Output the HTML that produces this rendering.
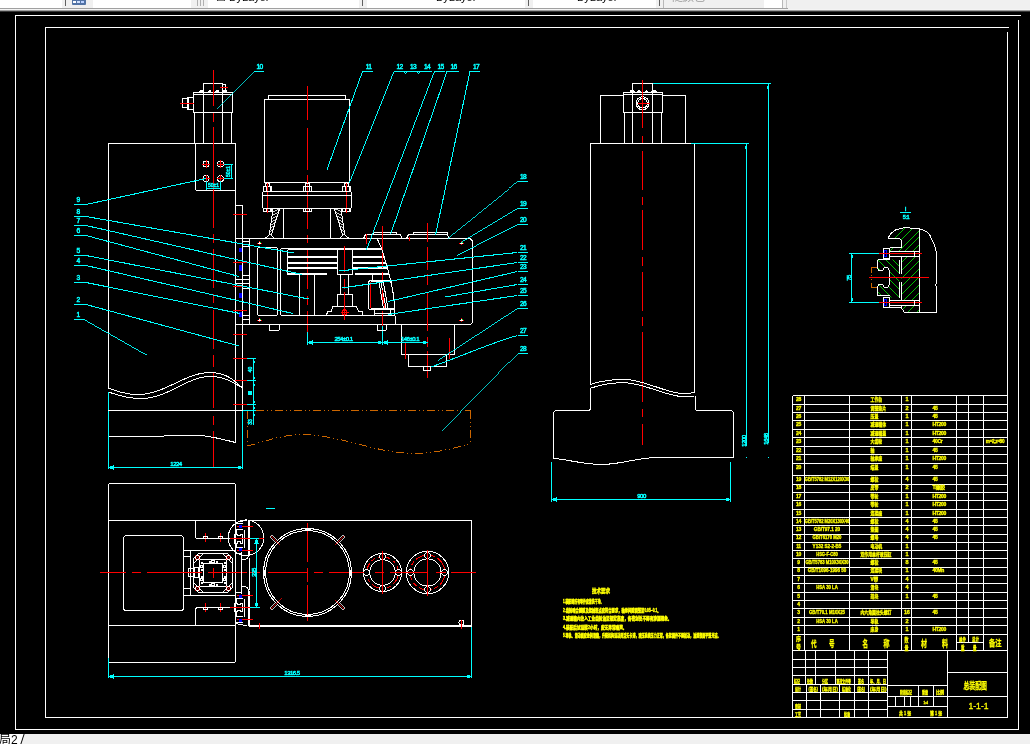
<!DOCTYPE html>
<html lang="zh">
<head>
<meta charset="utf-8">
<title>总装配图 1-1-1</title>
<style>
html,body{margin:0;padding:0;background:#000;overflow:hidden}
body{width:1030px;height:744px;position:relative;font-family:"Liberation Sans","Noto Sans CJK SC",sans-serif}
#tb{position:absolute;left:0;top:0;width:1030px;height:12px;background:#f0f0f0;overflow:hidden}
#tb .w{position:absolute;top:0;height:8px;background:#fff}
#tb .vl{position:absolute;top:0;width:1px;height:6px;background:#606060}
#tb .sep{position:absolute;top:0;height:8px;width:2px;background:#a0a0a0}
#tb .txt{position:absolute;will-change:transform;top:-9px;font-size:11px;line-height:12px;color:#000;white-space:nowrap}
#tb .g{color:#999}
#tb .b1{position:absolute;left:0;top:8px;width:788px;height:1px;background:#a0a0a0}
#tb .b2{position:absolute;left:0;top:9px;width:1030px;height:1px;background:#f4f4f4}
#tb .b3{position:absolute;left:0;top:10px;width:1030px;height:1px;background:#a0a0a0}
#tb .b4{position:absolute;left:0;top:11px;width:1030px;height:1px;background:#383838}
#sb{position:absolute;left:0;top:734px;width:1030px;height:10px;background:#f0f0f0;overflow:hidden}
#sb .tab{position:absolute;left:-8px;top:0;width:30px;height:10px;background:#fff;transform:skewX(-18deg);border-right:1px solid #000}
#sb .lbl{position:absolute;left:-1px;top:0px;will-change:transform;font-size:12px;line-height:13px;color:#000;white-space:nowrap}
svg{position:absolute;left:0;top:0}
svg text{font-family:"Liberation Sans","Noto Sans CJK SC",sans-serif}
</style>
</head>
<body>
<div id="tb">
<div class="w" style="left:0;width:62px"></div>
<div class="vl" style="left:65px"></div>
<div style="position:absolute;left:72px;top:0;width:14px;height:5px;background:#5273a5;border-radius:0 0 1px 1px"></div>
<div style="position:absolute;left:73px;top:1px;width:3px;height:2px;background:#fff"></div>
<div style="position:absolute;left:77px;top:1px;width:3px;height:2px;background:#cfe0ff"></div>
<div style="position:absolute;left:81px;top:1px;width:3px;height:2px;background:#b9d0ff"></div>
<div class="w" style="left:93px;width:98px"></div>
<div class="vl" style="left:197px;background:#b0b0b0"></div><div class="vl" style="left:200px;background:#b0b0b0"></div><div class="vl" style="left:203px;background:#b0b0b0"></div>
<div class="w" style="left:208px;width:151px"></div><div class="vl" style="left:362px"></div>
<div class="w" style="left:367px;width:158px"></div><div class="vl" style="left:528px"></div>
<div class="w" style="left:533px;width:123px"></div><div class="vl" style="left:659px"></div>
<div class="vl" style="left:663px;height:8px;background:#b8b8b8"></div><div class="w" style="left:764px;width:18px"></div><div class="vl" style="left:782px;height:8px;background:#b8b8b8"></div><div class="vl" style="left:786px;height:8px;background:#c8c8c8"></div>
<span class="txt" style="left:216px">☐ ByLayer</span>
<span class="txt" style="left:436px">ByLayer</span>
<span class="txt" style="left:577px">ByLayer</span>
<span class="txt g" style="left:672px;top:-9px">随颜色</span>
<div class="b1"></div><div class="b2"></div><div class="b3"></div><div class="b4"></div>
</div>
<svg width="1030" height="744" viewBox="0 0 1030 744" fill="none" stroke-width="1" shape-rendering="crispEdges">
<line x1="15" y1="15.5" x2="1021" y2="15.5" stroke="#fff"/>
<line x1="15.5" y1="15" x2="15.5" y2="730" stroke="#fff"/>
<line x1="15" y1="729.5" x2="1019" y2="729.5" stroke="#fff"/>
<line x1="1018.5" y1="20" x2="1018.5" y2="730" stroke="#fff"/>
<line x1="45" y1="27.5" x2="1009" y2="27.5" stroke="#fff"/>
<line x1="45.5" y1="27" x2="45.5" y2="718" stroke="#fff"/>
<line x1="45" y1="717.5" x2="1008" y2="717.5" stroke="#fff"/>
<line x1="1007.5" y1="32" x2="1007.5" y2="718" stroke="#fff"/>
<line x1="108.5" y1="143.5" x2="108.5" y2="388.5" stroke="#fff"/>
<line x1="108" y1="143.5" x2="196" y2="143.5" stroke="#fff"/>
<path d="M195.5,143.5 V188.5 Q195.5,190.5 197.5,190.5 H235.5" stroke="#fff" fill="none"/>
<line x1="235.5" y1="143.5" x2="235.5" y2="443" stroke="#fff"/>
<line x1="195.5" y1="143.5" x2="236" y2="143.5" stroke="#fff"/>
<line x1="235.5" y1="205.5" x2="243" y2="205.5" stroke="#fff"/>
<line x1="242.5" y1="205.5" x2="242.5" y2="410.5" stroke="#fff"/>
<path d="M203.5,92.5 V83.5 H222.5 V92.5" stroke="#fff" fill="none"/>
<rect x="222.5" y="84.5" width="3" height="6" stroke="#fff" fill="none"/>
<rect x="193.5" y="92.5" width="39" height="20" stroke="#fff" fill="none"/>
<line x1="193.5" y1="94.5" x2="232.5" y2="94.5" stroke="#fff"/>
<line x1="203.5" y1="92.5" x2="203.5" y2="143.5" stroke="#fff"/>
<line x1="222.5" y1="92.5" x2="222.5" y2="143.5" stroke="#fff"/>
<line x1="194.5" y1="112.5" x2="194.5" y2="143.5" stroke="#fff"/>
<line x1="231.5" y1="112.5" x2="231.5" y2="143.5" stroke="#fff"/>
<rect x="199" y="91" width="4.5" height="1" fill="#fff" stroke="none"/>
<rect x="200" y="90" width="3" height="1" fill="#fff" stroke="none"/>
<rect x="208" y="91" width="3" height="1" fill="#fff" stroke="none"/>
<rect x="209" y="90" width="1.5" height="1" fill="#fff" stroke="none"/>
<rect x="215" y="91" width="4" height="1" fill="#fff" stroke="none"/>
<rect x="216" y="90" width="2.5" height="1" fill="#fff" stroke="none"/>
<rect x="223" y="91" width="4" height="1" fill="#fff" stroke="none"/>
<rect x="224" y="90" width="2.5" height="1" fill="#fff" stroke="none"/>
<rect x="182.5" y="98.5" width="5" height="9" stroke="#fff" fill="none"/>
<rect x="187.5" y="97.5" width="6" height="12" stroke="#fff" fill="none"/>
<line x1="188.5" y1="97.5" x2="188.5" y2="109.5" stroke="#fff"/>
<line x1="180" y1="103.5" x2="194" y2="103.5" stroke="#f00"/>
<line x1="220" y1="87.5" x2="228" y2="87.5" stroke="#f00"/>
<line x1="213.5" y1="70" x2="213.5" y2="106" stroke="#f00"/>
<line x1="213.5" y1="113" x2="213.5" y2="122" stroke="#f00"/>
<line x1="213.5" y1="127" x2="213.5" y2="227.5" stroke="#f00"/>
<line x1="213.5" y1="234" x2="213.5" y2="242.5" stroke="#f00"/>
<line x1="213.5" y1="249" x2="213.5" y2="287.5" stroke="#f00"/>
<line x1="213.5" y1="294" x2="213.5" y2="302.5" stroke="#f00"/>
<line x1="213.5" y1="310" x2="213.5" y2="349" stroke="#f00"/>
<line x1="213.5" y1="355" x2="213.5" y2="367" stroke="#f00"/>
<line x1="213.5" y1="372" x2="213.5" y2="408" stroke="#f00"/>
<line x1="213.5" y1="416" x2="213.5" y2="425" stroke="#f00"/>
<line x1="213.5" y1="431" x2="213.5" y2="467" stroke="#f00"/>
<circle cx="206" cy="164" r="3" stroke="#fff" fill="none"/>
<line x1="202" y1="164" x2="210" y2="164" stroke="#f00"/>
<line x1="206" y1="160" x2="206" y2="168" stroke="#f00"/>
<circle cx="206" cy="178.5" r="3" stroke="#fff" fill="none"/>
<line x1="202" y1="178.5" x2="210" y2="178.5" stroke="#f00"/>
<line x1="206" y1="174.5" x2="206" y2="182.5" stroke="#f00"/>
<circle cx="220.5" cy="164" r="3" stroke="#fff" fill="none"/>
<line x1="216.5" y1="164" x2="224.5" y2="164" stroke="#f00"/>
<line x1="220.5" y1="160" x2="220.5" y2="168" stroke="#f00"/>
<circle cx="220.5" cy="178.5" r="3" stroke="#fff" fill="none"/>
<line x1="216.5" y1="178.5" x2="224.5" y2="178.5" stroke="#f00"/>
<line x1="220.5" y1="174.5" x2="220.5" y2="182.5" stroke="#f00"/>
<line x1="224" y1="164.5" x2="233" y2="164.5" stroke="#0ff"/>
<line x1="224" y1="178.5" x2="233" y2="178.5" stroke="#0ff"/>
<line x1="231.5" y1="164" x2="231.5" y2="179" stroke="#0ff"/>
<text x="230" y="171.5" fill="#0ff" stroke="#0ff" stroke-width="0.5" font-size="5" text-anchor="middle" transform="rotate(-90 230 171.5)">50±1</text>
<line x1="206.5" y1="181" x2="206.5" y2="190" stroke="#0ff"/>
<line x1="220.5" y1="181" x2="220.5" y2="190" stroke="#0ff"/>
<line x1="206" y1="188.5" x2="221" y2="188.5" stroke="#0ff"/>
<text x="213.5" y="187" fill="#0ff" stroke="#0ff" stroke-width="0.5" font-size="5" text-anchor="middle">50±1</text>
<rect x="264.5" y="99.5" width="85" height="83" stroke="#fff" fill="none"/>
<path d="M268.5,99.5 V95.5 H345.5 V99.5" stroke="#fff" fill="none"/>
<line x1="307.5" y1="86" x2="307.5" y2="120" stroke="#f00"/>
<line x1="307.5" y1="128" x2="307.5" y2="170" stroke="#f00"/>
<line x1="307.5" y1="175" x2="307.5" y2="229" stroke="#f00"/>
<line x1="307.5" y1="234.5" x2="307.5" y2="243" stroke="#f00"/>
<line x1="307.5" y1="247.5" x2="307.5" y2="288.5" stroke="#f00"/>
<line x1="307.5" y1="296" x2="307.5" y2="305" stroke="#f00"/>
<line x1="307.5" y1="310.5" x2="307.5" y2="332" stroke="#f00"/>
<rect x="263.5" y="186.5" width="8" height="5" stroke="#fff" fill="none"/>
<rect x="265.5" y="183.5" width="4" height="3" stroke="#fff" fill="none"/>
<rect x="263.5" y="208.5" width="8" height="3" stroke="#fff" fill="none"/>
<line x1="266.5" y1="186.5" x2="266.5" y2="191.5" stroke="#fff"/>
<line x1="270.5" y1="186.5" x2="270.5" y2="191.5" stroke="#fff"/>
<line x1="266.5" y1="208.5" x2="266.5" y2="211.5" stroke="#fff"/>
<line x1="270.5" y1="208.5" x2="270.5" y2="211.5" stroke="#fff"/>
<line x1="267.5" y1="183" x2="267.5" y2="213" stroke="#f00"/>
<rect x="303.5" y="186.5" width="8" height="5" stroke="#fff" fill="none"/>
<rect x="305.5" y="183.5" width="4" height="3" stroke="#fff" fill="none"/>
<rect x="303.5" y="208.5" width="8" height="3" stroke="#fff" fill="none"/>
<line x1="305.5" y1="186.5" x2="305.5" y2="191.5" stroke="#fff"/>
<line x1="309.5" y1="186.5" x2="309.5" y2="191.5" stroke="#fff"/>
<line x1="305.5" y1="208.5" x2="305.5" y2="211.5" stroke="#fff"/>
<line x1="309.5" y1="208.5" x2="309.5" y2="211.5" stroke="#fff"/>
<rect x="342.5" y="186.5" width="8" height="5" stroke="#fff" fill="none"/>
<rect x="344.5" y="183.5" width="4" height="3" stroke="#fff" fill="none"/>
<rect x="342.5" y="208.5" width="8" height="3" stroke="#fff" fill="none"/>
<line x1="345.5" y1="186.5" x2="345.5" y2="191.5" stroke="#fff"/>
<line x1="349.5" y1="186.5" x2="349.5" y2="191.5" stroke="#fff"/>
<line x1="345.5" y1="208.5" x2="345.5" y2="211.5" stroke="#fff"/>
<line x1="349.5" y1="208.5" x2="349.5" y2="211.5" stroke="#fff"/>
<line x1="346.5" y1="183" x2="346.5" y2="213" stroke="#f00"/>
<rect x="262.5" y="191.5" width="89" height="17" rx="2" stroke="#fff" fill="none"/>
<line x1="262.5" y1="195.5" x2="351.5" y2="195.5" stroke="#fff"/>
<line x1="283.5" y1="208.5" x2="283.5" y2="238.5" stroke="#fff"/>
<line x1="330.5" y1="208.5" x2="330.5" y2="238.5" stroke="#fff"/>
<path d="M273,209 L269.3,235 L265.5,238 M279.5,209 L272.3,232 L271.5,235 L273.5,238" stroke="#fff" fill="none"/>
<path d="M273,212 L279.5,209" stroke="#fff" fill="none" stroke-width="0.8"/>
<path d="M272.54,215.25 L278.56,212.25" stroke="#fff" fill="none" stroke-width="0.8"/>
<path d="M272.07,218.5 L277.62,215.5" stroke="#fff" fill="none" stroke-width="0.8"/>
<path d="M271.61,221.75 L276.69,218.75" stroke="#fff" fill="none" stroke-width="0.8"/>
<path d="M271.15,225 L275.75,222" stroke="#fff" fill="none" stroke-width="0.8"/>
<path d="M270.69,228.25 L274.81,225.25" stroke="#fff" fill="none" stroke-width="0.8"/>
<path d="M270.23,231.5 L273.88,228.5" stroke="#fff" fill="none" stroke-width="0.8"/>
<path d="M269.76,234.75 L272.94,231.75" stroke="#fff" fill="none" stroke-width="0.8"/>
<path d="M341,209 L344.7,235 L348.5,238 M334.5,209 L341.7,232 L342.5,235 L340.5,238" stroke="#fff" fill="none"/>
<path d="M341,212 L334.5,209" stroke="#fff" fill="none" stroke-width="0.8"/>
<path d="M341.46,215.25 L335.44,212.25" stroke="#fff" fill="none" stroke-width="0.8"/>
<path d="M341.93,218.5 L336.38,215.5" stroke="#fff" fill="none" stroke-width="0.8"/>
<path d="M342.39,221.75 L337.31,218.75" stroke="#fff" fill="none" stroke-width="0.8"/>
<path d="M342.85,225 L338.25,222" stroke="#fff" fill="none" stroke-width="0.8"/>
<path d="M343.31,228.25 L339.19,225.25" stroke="#fff" fill="none" stroke-width="0.8"/>
<path d="M343.77,231.5 L340.12,228.5" stroke="#fff" fill="none" stroke-width="0.8"/>
<path d="M344.24,234.75 L341.06,231.75" stroke="#fff" fill="none" stroke-width="0.8"/>
<path d="M235.5,238.5 H468.5 Q472.5,238.5 472.5,242.5 V320.5 Q472.5,324.5 468.5,324.5 H235.5" stroke="#fff" fill="none"/>
<line x1="249.5" y1="238.5" x2="249.5" y2="324.5" stroke="#fff"/>
<line x1="242.5" y1="241.5" x2="249.5" y2="241.5" stroke="#fff"/>
<line x1="242.5" y1="246.5" x2="249.5" y2="246.5" stroke="#fff"/>
<line x1="242.5" y1="275.5" x2="249.5" y2="275.5" stroke="#fff"/>
<line x1="235.5" y1="279.5" x2="249.5" y2="279.5" stroke="#fff"/>
<line x1="235.5" y1="283.5" x2="249.5" y2="283.5" stroke="#fff"/>
<line x1="242.5" y1="288.5" x2="249.5" y2="288.5" stroke="#fff"/>
<line x1="242.5" y1="315.5" x2="249.5" y2="315.5" stroke="#fff"/>
<line x1="242.5" y1="319.5" x2="249.5" y2="319.5" stroke="#fff"/>
<rect x="239" y="248" width="3" height="4" fill="#00f" stroke="none"/>
<rect x="239" y="265" width="3" height="5.5" fill="#00f" stroke="none"/>
<rect x="239" y="292.5" width="3" height="5" fill="#00f" stroke="none"/>
<rect x="239" y="312" width="3" height="4.5" fill="#00f" stroke="none"/>
<line x1="233" y1="214.5" x2="246.5" y2="214.5" stroke="#f00"/>
<line x1="233" y1="262.5" x2="246.5" y2="262.5" stroke="#f00"/>
<line x1="233" y1="286.5" x2="246.5" y2="286.5" stroke="#f00"/>
<line x1="233" y1="310.5" x2="246.5" y2="310.5" stroke="#f00"/>
<line x1="233" y1="334.5" x2="246.5" y2="334.5" stroke="#f00"/>
<line x1="233" y1="358.5" x2="246.5" y2="358.5" stroke="#f00"/>
<line x1="233" y1="380.5" x2="246.5" y2="380.5" stroke="#f00"/>
<line x1="233" y1="404.5" x2="246.5" y2="404.5" stroke="#f00"/>
<rect x="257.5" y="247.5" width="20" height="68" rx="2" stroke="#fff" fill="none"/>
<path d="M394.5,315.5 H283 Q280.5,315.5 280.5,313 V250.5 Q280.5,248 283,248 H380.5" stroke="#fff" fill="none"/>
<line x1="287.5" y1="249.5" x2="287.5" y2="274.5" stroke="#fff"/>
<line x1="287.5" y1="249.5" x2="337.5" y2="249.5" stroke="#fff"/>
<rect x="287" y="255.5" width="51" height="2" fill="#fff" stroke="none"/>
<rect x="287" y="261.5" width="51" height="2" fill="#fff" stroke="none"/>
<rect x="287" y="266.5" width="51" height="2" fill="#fff" stroke="none"/>
<rect x="287" y="273" width="40" height="2" fill="#fff" stroke="none"/>
<rect x="337.5" y="249.5" width="15" height="25" stroke="#fff" fill="none"/>
<line x1="352.5" y1="249.5" x2="381" y2="249.5" stroke="#fff"/>
<rect x="352" y="255.5" width="32.5" height="2" fill="#fff" stroke="none"/>
<rect x="352" y="261.5" width="34" height="2" fill="#fff" stroke="none"/>
<rect x="352" y="266.5" width="35.5" height="2" fill="#fff" stroke="none"/>
<rect x="355" y="272.5" width="34" height="2" fill="#fff" stroke="none"/>
<line x1="299.5" y1="274.5" x2="299.5" y2="315.5" stroke="#fff"/>
<line x1="314.5" y1="274.5" x2="314.5" y2="315.5" stroke="#fff"/>
<line x1="340.5" y1="274.5" x2="340.5" y2="294.5" stroke="#fff"/>
<line x1="348.5" y1="274.5" x2="348.5" y2="294.5" stroke="#fff"/>
<rect x="337.5" y="294.5" width="15" height="12" stroke="#fff" fill="none"/>
<path d="M326.5,315.5 L327.5,311.5 H331 L333,306.5 H356.5 L358.5,311.5 H362 L363,315.5" stroke="#fff" fill="none"/>
<circle cx="344.5" cy="312.2" r="2.5" stroke="#f00" fill="none"/>
<line x1="341" y1="312.5" x2="348.5" y2="312.5" stroke="#f00"/>
<line x1="344.5" y1="246" x2="344.5" y2="272" stroke="#f00"/>
<line x1="344.5" y1="278.5" x2="344.5" y2="289" stroke="#f00"/>
<line x1="344.5" y1="292" x2="344.5" y2="320" stroke="#f00"/>
<path d="M363.5,238.5 L365.5,234.5 H400 L402.5,238.5 M373.5,234.5 V232.5 H396 V234.5" stroke="#fff" fill="none"/>
<path d="M406.5,238.5 L408.5,234.5 H447 L449.5,238.5 M413.5,234.5 V232.5 H447 V234.5" stroke="#fff" fill="none"/>
<line x1="366.5" y1="234" x2="366.5" y2="244" stroke="#f00"/>
<line x1="409.5" y1="237" x2="409.5" y2="240.5" stroke="#f00"/>
<line x1="382.5" y1="226" x2="382.5" y2="267.5" stroke="#f00"/>
<line x1="382.5" y1="271.5" x2="382.5" y2="282.5" stroke="#f00"/>
<line x1="382.5" y1="288" x2="382.5" y2="305" stroke="#f00"/>
<line x1="382.5" y1="310.5" x2="382.5" y2="326" stroke="#f00"/>
<line x1="382.5" y1="326" x2="382.5" y2="344.5" stroke="#0ff"/>
<line x1="427.5" y1="223" x2="427.5" y2="242" stroke="#f00"/>
<line x1="427.5" y1="247" x2="427.5" y2="270" stroke="#f00"/>
<line x1="427.5" y1="274" x2="427.5" y2="285" stroke="#f00"/>
<line x1="427.5" y1="292" x2="427.5" y2="331" stroke="#f00"/>
<line x1="427.5" y1="337" x2="427.5" y2="346.5" stroke="#f00"/>
<line x1="427.5" y1="351" x2="427.5" y2="377.5" stroke="#f00"/>
<path d="M377,238.5 L381,246.7 L383.4,253.7 L386,263.2 L387.8,268.8 L390.3,279 L392.9,291.6 L394.1,301.7 L394.8,314.3 L396,324.5" stroke="#fff" fill="none"/>
<path d="M394,280.5 H371 Q368.5,280.5 368.5,283 V307 Q368.5,309.5 371,309.5 H394.5" stroke="#fff" fill="none"/>
<path d="M392,281.5 H371 M371,308.5 H394.5" stroke="#fff" fill="none"/>
<line x1="370.5" y1="282" x2="370.5" y2="307.5" stroke="#f00"/>
<line x1="372.5" y1="274.5" x2="372.5" y2="280.5" stroke="#fff"/>
<path d="M379,282 L383.4,308 M380.9,282 L386,308 M383.4,282 L387.8,308" stroke="#fff" fill="none"/>
<line x1="382" y1="290" x2="384.6" y2="308" stroke="#f00" stroke-width="1.05"/>
<path d="M374.5,309.5 V314.5 M390.5,309.5 V314.5 M373.5,313.5 H394.5" stroke="#fff" fill="none"/>
<rect x="258" y="243" width="3" height="1" fill="#fff" stroke="none"/>
<rect x="259" y="242" width="1" height="1" fill="#fff" stroke="none"/>
<rect x="257" y="243" width="1" height="1" fill="#f00" stroke="none"/>
<rect x="261" y="243" width="1" height="1" fill="#f00" stroke="none"/>
<rect x="259" y="241" width="1" height="1" fill="#f00" stroke="none"/>
<rect x="259" y="244" width="1" height="1" fill="#f00" stroke="none"/>
<rect x="260" y="242" width="1" height="1" fill="#0c0" stroke="none"/>
<rect x="258" y="320" width="3" height="1" fill="#fff" stroke="none"/>
<rect x="259" y="319" width="1" height="1" fill="#fff" stroke="none"/>
<rect x="257" y="320" width="1" height="1" fill="#f00" stroke="none"/>
<rect x="261" y="320" width="1" height="1" fill="#f00" stroke="none"/>
<rect x="259" y="318" width="1" height="1" fill="#f00" stroke="none"/>
<rect x="259" y="321" width="1" height="1" fill="#f00" stroke="none"/>
<rect x="260" y="319" width="1" height="1" fill="#0c0" stroke="none"/>
<rect x="460" y="243" width="3" height="1" fill="#fff" stroke="none"/>
<rect x="461" y="242" width="1" height="1" fill="#fff" stroke="none"/>
<rect x="459" y="243" width="1" height="1" fill="#f00" stroke="none"/>
<rect x="463" y="243" width="1" height="1" fill="#f00" stroke="none"/>
<rect x="461" y="241" width="1" height="1" fill="#f00" stroke="none"/>
<rect x="461" y="244" width="1" height="1" fill="#f00" stroke="none"/>
<rect x="462" y="242" width="1" height="1" fill="#0c0" stroke="none"/>
<rect x="460" y="320" width="3" height="1" fill="#fff" stroke="none"/>
<rect x="461" y="319" width="1" height="1" fill="#fff" stroke="none"/>
<rect x="459" y="320" width="1" height="1" fill="#f00" stroke="none"/>
<rect x="463" y="320" width="1" height="1" fill="#f00" stroke="none"/>
<rect x="461" y="318" width="1" height="1" fill="#f00" stroke="none"/>
<rect x="461" y="321" width="1" height="1" fill="#f00" stroke="none"/>
<rect x="462" y="319" width="1" height="1" fill="#0c0" stroke="none"/>
<path d="M269.5,324.5 V329 Q269.5,330.5 271,330.5 H278 Q279.5,330.5 279.5,329 V324.5" stroke="#fff" fill="none"/>
<path d="M377.5,324.5 V329 Q377.5,330.5 379,330.5 H385 Q386.5,330.5 386.5,329 V324.5" stroke="#fff" fill="none"/>
<path d="M401.5,324.5 V354.5 H454.5 V324.5" stroke="#fff" fill="none"/>
<path d="M408.5,354.5 V366.5 H446.5 V354.5" stroke="#fff" fill="none"/>
<rect x="423.5" y="366.5" width="7" height="4" stroke="#fff" fill="none"/>
<line x1="405.5" y1="343" x2="405.5" y2="359" stroke="#f00"/>
<line x1="449.5" y1="338" x2="449.5" y2="358.5" stroke="#f00"/>
<line x1="307.5" y1="332" x2="307.5" y2="344.5" stroke="#0ff"/>
<line x1="307" y1="342.5" x2="428" y2="342.5" stroke="#0ff"/>
<path d="M308,342.5 l4,-1.5 v3 z" stroke="#0ff" fill="#0ff"/>
<path d="M382,342.5 l-4,-1.5 v3 z" stroke="#0ff" fill="#0ff"/>
<path d="M383,342.5 l4,-1.5 v3 z" stroke="#0ff" fill="#0ff"/>
<path d="M427,342.5 l-4,-1.5 v3 z" stroke="#0ff" fill="#0ff"/>
<text x="343.5" y="341" fill="#0ff" stroke="#0ff" stroke-width="0.5" font-size="6" text-anchor="middle" letter-spacing="-0.5">254±0.1</text>
<text x="410" y="341" fill="#0ff" stroke="#0ff" stroke-width="0.5" font-size="6" text-anchor="middle" letter-spacing="-0.5">146±0.1</text>
<line x1="253.5" y1="358.5" x2="253.5" y2="425" stroke="#0ff"/>
<line x1="246.5" y1="358.5" x2="256" y2="358.5" stroke="#0ff"/>
<line x1="246.5" y1="380.5" x2="256" y2="380.5" stroke="#0ff"/>
<line x1="246.5" y1="404.5" x2="256" y2="404.5" stroke="#0ff"/>
<line x1="242.5" y1="410.5" x2="256" y2="410.5" stroke="#0ff"/>
<text x="252" y="369.5" fill="#0ff" stroke="#0ff" stroke-width="0.5" font-size="5" text-anchor="middle" transform="rotate(-90 252 369.5)">40</text>
<rect x="248" y="391" width="3.5" height="3.5" fill="#0ff" stroke="none"/>
<text x="252" y="422" fill="#0ff" stroke="#0ff" stroke-width="0.5" font-size="5" text-anchor="middle" transform="rotate(-90 252 422)">33</text>
<rect x="253" y="361" width="2" height="2" fill="#0ff" stroke="none"/>
<rect x="253" y="377" width="2" height="2" fill="#0ff" stroke="none"/>
<rect x="253" y="384" width="2" height="2" fill="#0ff" stroke="none"/>
<rect x="253" y="401" width="2" height="2" fill="#0ff" stroke="none"/>
<rect x="253" y="407" width="2" height="2" fill="#0ff" stroke="none"/>
<rect x="253" y="414" width="2" height="2" fill="#0ff" stroke="none"/>
<line x1="242.5" y1="410.5" x2="242.5" y2="469" stroke="#0ff"/>
<path d="M108.5,388 C118,391.5 126,394.5 138,394.5 C165,394.5 185,372.5 210,372.5 C226,372.5 234,380 243,388.5" stroke="#fff" fill="none"/>
<path d="M108.5,392 C118,395.5 128,398.5 141,398.5 C168,398.5 187,376.5 210,376.5 C224,376.5 233,382 241.5,387.5" stroke="#fff" fill="none"/>
<line x1="108.5" y1="392" x2="108.5" y2="469" stroke="#0ff"/>
<line x1="108" y1="410.5" x2="242.5" y2="410.5" stroke="#fff"/>
<path d="M108.5,436.5 H163 L165,435.5 H200 C214,436.5 225,440 235.5,442.5" stroke="#fff" fill="none"/>
<line x1="108" y1="467.5" x2="243" y2="467.5" stroke="#0ff"/>
<path d="M109,467.5 l4,-1.5 v3 z M242,467.5 l-4,-1.5 v3 z" stroke="#0ff" fill="#0ff"/>
<text x="176" y="466" fill="#0ff" stroke="#0ff" stroke-width="0.5" font-size="6" text-anchor="middle" letter-spacing="-0.5">1224</text>
<path d="M256,410.5 H470.5" stroke="#c60" fill="none" stroke-dasharray="8 3 1 3 1 3"/>
<path d="M247.5,411 V446" stroke="#c60" fill="none" stroke-dasharray="8 3 1 3 1 3"/>
<path d="M470.5,411 V443.5" stroke="#c60" fill="none" stroke-dasharray="8 3 1 3 1 3"/>
<path d="M247.5,446 C266,441 284,434.5 301.5,434.5 C340,434.5 375,453.5 415.5,453.5 C435,453.5 455,448 470.5,443.5" stroke="#c60" fill="none" stroke-dasharray="8 3 1 3 1 3"/>
<line x1="74" y1="204.5" x2="86" y2="204.5" stroke="#0ff"/>
<line x1="86" y1="204.5" x2="206" y2="178.5" stroke="#0ff" stroke-width="1.04"/>
<text x="78" y="201.7" fill="#0ff" stroke="#0ff" stroke-width="0.5" font-size="6.6" text-anchor="middle" letter-spacing="-0.6">9</text>
<line x1="74" y1="216.5" x2="86" y2="216.5" stroke="#0ff"/>
<line x1="86" y1="216.5" x2="294" y2="253" stroke="#0ff" stroke-width="1.04"/>
<text x="78" y="213.7" fill="#0ff" stroke="#0ff" stroke-width="0.5" font-size="6.6" text-anchor="middle" letter-spacing="-0.6">8</text>
<line x1="74" y1="225.5" x2="86" y2="225.5" stroke="#0ff"/>
<line x1="86" y1="225.5" x2="302" y2="274.5" stroke="#0ff" stroke-width="1.03"/>
<text x="78" y="222.7" fill="#0ff" stroke="#0ff" stroke-width="0.5" font-size="6.6" text-anchor="middle" letter-spacing="-0.6">7</text>
<line x1="74" y1="235.5" x2="86" y2="235.5" stroke="#0ff"/>
<line x1="86" y1="235.5" x2="239" y2="276.5" stroke="#0ff" stroke-width="1.02"/>
<text x="78" y="232.7" fill="#0ff" stroke="#0ff" stroke-width="0.5" font-size="6.6" text-anchor="middle" letter-spacing="-0.6">6</text>
<line x1="74" y1="255.5" x2="86" y2="255.5" stroke="#0ff"/>
<line x1="86" y1="255.5" x2="308.5" y2="299" stroke="#0ff" stroke-width="1.04"/>
<text x="78" y="252.7" fill="#0ff" stroke="#0ff" stroke-width="0.5" font-size="6.6" text-anchor="middle" letter-spacing="-0.6">5</text>
<line x1="74" y1="265.5" x2="86" y2="265.5" stroke="#0ff"/>
<line x1="86" y1="265.5" x2="293" y2="313.5" stroke="#0ff" stroke-width="1.03"/>
<text x="78" y="262.7" fill="#0ff" stroke="#0ff" stroke-width="0.5" font-size="6.6" text-anchor="middle" letter-spacing="-0.6">4</text>
<line x1="74" y1="282.5" x2="86" y2="282.5" stroke="#0ff"/>
<line x1="86" y1="282.5" x2="240" y2="313.5" stroke="#0ff" stroke-width="1.04"/>
<text x="78" y="279.7" fill="#0ff" stroke="#0ff" stroke-width="0.5" font-size="6.6" text-anchor="middle" letter-spacing="-0.6">3</text>
<line x1="74" y1="304.5" x2="86" y2="304.5" stroke="#0ff"/>
<line x1="86" y1="304.5" x2="239" y2="346" stroke="#0ff" stroke-width="1.02"/>
<text x="78" y="301.7" fill="#0ff" stroke="#0ff" stroke-width="0.5" font-size="6.6" text-anchor="middle" letter-spacing="-0.6">2</text>
<line x1="74" y1="319.5" x2="84" y2="319.5" stroke="#0ff"/>
<line x1="84" y1="319.5" x2="146.5" y2="355" stroke="#0ff" stroke-width="0.92"/>
<text x="78" y="316.7" fill="#0ff" stroke="#0ff" stroke-width="0.5" font-size="6.6" text-anchor="middle" letter-spacing="-0.6">1</text>
<line x1="253.5" y1="71.5" x2="264" y2="71.5" stroke="#0ff"/>
<line x1="253.5" y1="71.5" x2="217" y2="108.5" stroke="#0ff" stroke-width="0.75"/>
<text x="259.5" y="68.7" fill="#0ff" stroke="#0ff" stroke-width="0.5" font-size="6.6" text-anchor="middle" letter-spacing="-0.6">10</text>
<line x1="362.5" y1="71.5" x2="373" y2="71.5" stroke="#0ff"/>
<line x1="362.5" y1="71.5" x2="327" y2="169.5" stroke="#0ff" stroke-width="1"/>
<text x="368.5" y="68.7" fill="#0ff" stroke="#0ff" stroke-width="0.5" font-size="6.6" text-anchor="middle" letter-spacing="-0.6">11</text>
<line x1="393.5" y1="71.5" x2="431.5" y2="71.5" stroke="#0ff"/>
<line x1="393.5" y1="71.5" x2="349" y2="183" stroke="#0ff" stroke-width="0.98"/>
<text x="399.5" y="68.7" fill="#0ff" stroke="#0ff" stroke-width="0.5" font-size="6.6" text-anchor="middle" letter-spacing="-0.6">12</text>
<text x="413" y="68.7" fill="#0ff" stroke="#0ff" stroke-width="0.5" font-size="6.6" text-anchor="middle" letter-spacing="-0.6">13</text>
<text x="427" y="68.7" fill="#0ff" stroke="#0ff" stroke-width="0.5" font-size="6.6" text-anchor="middle" letter-spacing="-0.6">14</text>
<path d="M404,71.5 l1.5,2 l1.5,-2 M417,71.5 l1.5,2 l1.5,-2" stroke="#0ff" fill="none"/>
<line x1="434" y1="71.5" x2="445" y2="71.5" stroke="#0ff"/>
<line x1="434" y1="71.5" x2="366" y2="250" stroke="#0ff" stroke-width="0.99"/>
<text x="440.5" y="68.7" fill="#0ff" stroke="#0ff" stroke-width="0.5" font-size="6.6" text-anchor="middle" letter-spacing="-0.6">15</text>
<line x1="447" y1="71.5" x2="459" y2="71.5" stroke="#0ff"/>
<line x1="447" y1="71.5" x2="390.5" y2="234.5" stroke="#0ff" stroke-width="1"/>
<text x="453.5" y="68.7" fill="#0ff" stroke="#0ff" stroke-width="0.5" font-size="6.6" text-anchor="middle" letter-spacing="-0.6">16</text>
<line x1="470" y1="71.5" x2="480" y2="71.5" stroke="#0ff"/>
<line x1="470" y1="71.5" x2="435.5" y2="235" stroke="#0ff" stroke-width="1.04"/>
<text x="476" y="68.7" fill="#0ff" stroke="#0ff" stroke-width="0.5" font-size="6.6" text-anchor="middle" letter-spacing="-0.6">17</text>
<line x1="517.5" y1="181.5" x2="527.5" y2="181.5" stroke="#0ff"/>
<line x1="517.5" y1="181.5" x2="447.5" y2="238" stroke="#0ff" stroke-width="0.82"/>
<text x="523" y="178.7" fill="#0ff" stroke="#0ff" stroke-width="0.5" font-size="6.6" text-anchor="middle" letter-spacing="-0.6">18</text>
<line x1="517.5" y1="208.5" x2="527.5" y2="208.5" stroke="#0ff"/>
<line x1="517.5" y1="208.5" x2="461" y2="242.5" stroke="#0ff" stroke-width="0.91"/>
<text x="523" y="205.7" fill="#0ff" stroke="#0ff" stroke-width="0.5" font-size="6.6" text-anchor="middle" letter-spacing="-0.6">19</text>
<line x1="517.5" y1="224.5" x2="527.5" y2="224.5" stroke="#0ff"/>
<line x1="517.5" y1="224.5" x2="457" y2="255.5" stroke="#0ff" stroke-width="0.94"/>
<text x="523" y="221.7" fill="#0ff" stroke="#0ff" stroke-width="0.5" font-size="6.6" text-anchor="middle" letter-spacing="-0.6">20</text>
<line x1="517.5" y1="252.5" x2="527.5" y2="252.5" stroke="#0ff"/>
<line x1="517.5" y1="252.5" x2="339" y2="271" stroke="#0ff" stroke-width="1.05"/>
<text x="523" y="249.7" fill="#0ff" stroke="#0ff" stroke-width="0.5" font-size="6.6" text-anchor="middle" letter-spacing="-0.6">21</text>
<line x1="517.5" y1="262.5" x2="527.5" y2="262.5" stroke="#0ff"/>
<line x1="517.5" y1="262.5" x2="342" y2="288" stroke="#0ff" stroke-width="1.05"/>
<text x="523" y="259.7" fill="#0ff" stroke="#0ff" stroke-width="0.5" font-size="6.6" text-anchor="middle" letter-spacing="-0.6">22</text>
<line x1="517.5" y1="271.5" x2="527.5" y2="271.5" stroke="#0ff"/>
<line x1="517.5" y1="271.5" x2="388" y2="301.5" stroke="#0ff" stroke-width="1.03"/>
<text x="523" y="268.7" fill="#0ff" stroke="#0ff" stroke-width="0.5" font-size="6.6" text-anchor="middle" letter-spacing="-0.6">23</text>
<line x1="517.5" y1="284.5" x2="527.5" y2="284.5" stroke="#0ff"/>
<line x1="517.5" y1="284.5" x2="445" y2="297" stroke="#0ff" stroke-width="1.04"/>
<text x="523" y="281.7" fill="#0ff" stroke="#0ff" stroke-width="0.5" font-size="6.6" text-anchor="middle" letter-spacing="-0.6">24</text>
<line x1="517.5" y1="295.5" x2="527.5" y2="295.5" stroke="#0ff"/>
<line x1="517.5" y1="295.5" x2="388" y2="314.5" stroke="#0ff" stroke-width="1.05"/>
<text x="523" y="292.7" fill="#0ff" stroke="#0ff" stroke-width="0.5" font-size="6.6" text-anchor="middle" letter-spacing="-0.6">25</text>
<line x1="517.5" y1="308.5" x2="527.5" y2="308.5" stroke="#0ff"/>
<line x1="517.5" y1="308.5" x2="438" y2="360.5" stroke="#0ff" stroke-width="0.89"/>
<text x="523" y="305.7" fill="#0ff" stroke="#0ff" stroke-width="0.5" font-size="6.6" text-anchor="middle" letter-spacing="-0.6">26</text>
<line x1="517.5" y1="353.5" x2="527.5" y2="353.5" stroke="#0ff"/>
<line x1="517.5" y1="353.5" x2="442" y2="431" stroke="#0ff" stroke-width="0.76"/>
<text x="523" y="350.7" fill="#0ff" stroke="#0ff" stroke-width="0.5" font-size="6.6" text-anchor="middle" letter-spacing="-0.6">28</text>
<line x1="517.5" y1="335.5" x2="527.5" y2="335.5" stroke="#0ff"/>
<path d="M517.5,335.5 C490,343 460,357 431,367" stroke="#0ff" fill="none"/>
<text x="523" y="332.7" fill="#0ff" stroke="#0ff" stroke-width="0.5" font-size="6.6" text-anchor="middle" letter-spacing="-0.6">27</text>
<path d="M110.5,483.5 H233.5 Q235.5,483.5 235.5,485.5 V660.5 Q235.5,662.5 233.5,662.5 H110.5 Q108.5,662.5 108.5,660.5 V485.5 Q108.5,483.5 110.5,483.5 Z" stroke="#fff" fill="none"/>
<line x1="108.5" y1="520.5" x2="235.5" y2="520.5" stroke="#fff"/>
<line x1="108.5" y1="625.5" x2="235.5" y2="625.5" stroke="#fff"/>
<rect x="123.5" y="535.5" width="60" height="75" rx="3" stroke="#fff" fill="none"/>
<path d="M195.5,520.5 V536 Q195.5,538.5 198,538.5 H235.5" stroke="#fff" fill="none"/>
<path d="M195.5,625.5 V610 Q195.5,607.5 198,607.5 H235.5" stroke="#fff" fill="none"/>
<line x1="205.5" y1="533" x2="205.5" y2="542" stroke="#f00"/>
<rect x="203.5" y="536.5" width="4" height="2" stroke="#fff" fill="none"/>
<line x1="205.5" y1="603" x2="205.5" y2="612" stroke="#f00"/>
<rect x="203.5" y="607.5" width="4" height="2" stroke="#fff" fill="none"/>
<line x1="220.5" y1="533" x2="220.5" y2="542" stroke="#f00"/>
<rect x="218.5" y="536.5" width="4" height="2" stroke="#fff" fill="none"/>
<line x1="220.5" y1="603" x2="220.5" y2="612" stroke="#f00"/>
<rect x="218.5" y="607.5" width="4" height="2" stroke="#fff" fill="none"/>
<rect x="183.5" y="550.5" width="52" height="45" stroke="#fff" fill="none"/>
<line x1="190.5" y1="550.5" x2="190.5" y2="595.5" stroke="#fff"/>
<line x1="183.5" y1="556.5" x2="190.5" y2="556.5" stroke="#fff"/>
<line x1="183.5" y1="588.5" x2="190.5" y2="588.5" stroke="#fff"/>
<path d="M198.5,553.5 H227.5 L232.5,558.5 V587.5 L227.5,592.5 H198.5 L193.5,587.5 V558.5 Z" stroke="#fff" fill="none"/>
<path d="M193.5,563.5 L203.5,553.5 M222.5,553.5 L232.5,563.5 M193.5,582.5 L203.5,592.5 M222.5,592.5 L232.5,582.5" stroke="#fff" fill="none"/>
<rect x="199.5" y="559.5" width="27" height="27" stroke="#fff" fill="none"/>
<rect x="203.5" y="563.5" width="19" height="19" stroke="#fff" fill="none"/>
<rect x="188.5" y="568.5" width="5" height="8" stroke="#fff" fill="none"/>
<rect x="194.5" y="567.5" width="4" height="10" stroke="#fff" fill="none"/>
<rect x="208.5" y="560.5" width="2" height="2" fill="#fff" stroke="none"/>
<rect x="208.5" y="583.5" width="2" height="2" fill="#fff" stroke="none"/>
<rect x="215.5" y="560.5" width="2" height="2" fill="#fff" stroke="none"/>
<rect x="215.5" y="583.5" width="2" height="2" fill="#fff" stroke="none"/>
<rect x="211.5" y="560.5" width="3" height="2" stroke="#fff" fill="none"/>
<rect x="211.5" y="583.5" width="3" height="2" stroke="#fff" fill="none"/>
<rect x="200.5" y="562" width="2" height="2" fill="#fff" stroke="none"/>
<rect x="223.5" y="562" width="2" height="2" fill="#fff" stroke="none"/>
<rect x="200.5" y="568.5" width="2" height="2" fill="#fff" stroke="none"/>
<rect x="223.5" y="568.5" width="2" height="2" fill="#fff" stroke="none"/>
<rect x="200.5" y="575.5" width="2" height="2" fill="#fff" stroke="none"/>
<rect x="223.5" y="575.5" width="2" height="2" fill="#fff" stroke="none"/>
<rect x="200.5" y="581.5" width="2" height="2" fill="#fff" stroke="none"/>
<rect x="223.5" y="581.5" width="2" height="2" fill="#fff" stroke="none"/>
<rect x="200.5" y="565.5" width="2" height="2" stroke="#fff" fill="none"/>
<rect x="223.5" y="565.5" width="2" height="2" stroke="#fff" fill="none"/>
<rect x="200.5" y="578.5" width="2" height="2" stroke="#fff" fill="none"/>
<rect x="223.5" y="578.5" width="2" height="2" stroke="#fff" fill="none"/>
<line x1="213.5" y1="568" x2="213.5" y2="578" stroke="#f00"/>
<circle cx="197.5" cy="557.5" r="2" stroke="#fff" fill="none"/>
<line x1="195" y1="555" x2="200" y2="560" stroke="#f00" stroke-width="0.75"/>
<line x1="195" y1="560" x2="200" y2="555" stroke="#f00" stroke-width="0.75"/>
<circle cx="197.5" cy="588.5" r="2" stroke="#fff" fill="none"/>
<line x1="195" y1="586" x2="200" y2="591" stroke="#f00" stroke-width="0.75"/>
<line x1="195" y1="591" x2="200" y2="586" stroke="#f00" stroke-width="0.75"/>
<circle cx="228.5" cy="557.5" r="2" stroke="#fff" fill="none"/>
<line x1="226" y1="555" x2="231" y2="560" stroke="#f00" stroke-width="0.75"/>
<line x1="226" y1="560" x2="231" y2="555" stroke="#f00" stroke-width="0.75"/>
<circle cx="228.5" cy="588.5" r="2" stroke="#fff" fill="none"/>
<line x1="226" y1="586" x2="231" y2="591" stroke="#f00" stroke-width="0.75"/>
<line x1="226" y1="591" x2="231" y2="586" stroke="#f00" stroke-width="0.75"/>
<line x1="100" y1="572.5" x2="126" y2="572.5" stroke="#f00"/>
<line x1="132" y1="572.5" x2="141" y2="572.5" stroke="#f00"/>
<line x1="147" y1="572.5" x2="202" y2="572.5" stroke="#f00"/>
<line x1="208" y1="572.5" x2="247" y2="572.5" stroke="#f00"/>
<line x1="250" y1="572.5" x2="260" y2="572.5" stroke="#f00"/>
<line x1="268" y1="572.5" x2="307" y2="572.5" stroke="#f00"/>
<line x1="314" y1="572.5" x2="323" y2="572.5" stroke="#f00"/>
<line x1="329" y1="572.5" x2="366" y2="572.5" stroke="#f00"/>
<line x1="375" y1="572.5" x2="384" y2="572.5" stroke="#f00"/>
<line x1="390" y1="572.5" x2="428" y2="572.5" stroke="#f00"/>
<line x1="436" y1="572.5" x2="446" y2="572.5" stroke="#f00"/>
<line x1="451" y1="572.5" x2="475.5" y2="572.5" stroke="#f00"/>
<circle cx="246" cy="537.7" r="17.8" stroke="#fff" fill="none"/>
<line x1="241.5" y1="552" x2="241.5" y2="594" stroke="#fff"/>
<path d="M235.5,523.5 L238.5,521.5 L247.5,520.5" stroke="#fff" fill="none"/>
<line x1="248.5" y1="520.5" x2="248.5" y2="555" stroke="#fff"/>
<line x1="249.5" y1="520.5" x2="249.5" y2="555" stroke="#fff"/>
<path d="M248.5,555 Q248.5,559 244.5,559.5 H241.5 V552" stroke="#fff" fill="none"/>
<path d="M236,523.5 H242.5 M236,529.5 H243 M236.5,529.5 V534 M236.5,543 V547.5 M236,547.5 H243 M236,553.5 H242" stroke="#fff" fill="none"/>
<path d="M234.5,534.5 H237.5 V535.5 H240 V534.5 H242.5 V543 H240.5 V541.5 H237.5 V543 H234.5 Z" stroke="#fff" fill="none"/>
<path d="M244.5,529.5 V547.5" stroke="#fff" fill="none"/>
<line x1="237" y1="526.5" x2="253" y2="526.5" stroke="#f00"/>
<line x1="237" y1="550.5" x2="253" y2="550.5" stroke="#f00"/>
<line x1="230" y1="538.5" x2="251" y2="538.5" stroke="#f00"/>
<rect x="239" y="524.5" width="3" height="3" fill="#00f" stroke="none"/>
<rect x="239" y="548" width="3" height="3" fill="#00f" stroke="none"/>
<g transform="translate(0,1146) scale(1,-1)">
<path d="M235.5,523.5 L238.5,521.5 L247.5,520.5" stroke="#fff" fill="none"/>
<line x1="248.5" y1="520.5" x2="248.5" y2="555" stroke="#fff"/>
<line x1="249.5" y1="520.5" x2="249.5" y2="555" stroke="#fff"/>
<path d="M248.5,555 Q248.5,559 244.5,559.5 H241.5 V552" stroke="#fff" fill="none"/>
<path d="M236,523.5 H242.5 M236,529.5 H243 M236.5,529.5 V534 M236.5,543 V547.5 M236,547.5 H243 M236,553.5 H242" stroke="#fff" fill="none"/>
<path d="M234.5,534.5 H237.5 V535.5 H240 V534.5 H242.5 V543 H240.5 V541.5 H237.5 V543 H234.5 Z" stroke="#fff" fill="none"/>
<path d="M244.5,529.5 V547.5" stroke="#fff" fill="none"/>
<line x1="237" y1="526.5" x2="253" y2="526.5" stroke="#f00"/>
<line x1="237" y1="550.5" x2="253" y2="550.5" stroke="#f00"/>
<line x1="230" y1="538.5" x2="251" y2="538.5" stroke="#f00"/>
<rect x="239" y="524.5" width="3" height="3" fill="#00f" stroke="none"/>
<rect x="239" y="548" width="3" height="3" fill="#00f" stroke="none"/>
</g>
<line x1="259" y1="538.5" x2="263.5" y2="538.5" stroke="#f00"/>
<line x1="250" y1="520.5" x2="472" y2="520.5" stroke="#fff"/>
<line x1="471.5" y1="520.5" x2="471.5" y2="627" stroke="#fff"/>
<rect x="248.5" y="625" width="223.5" height="2" fill="#fff" stroke="none"/>
<line x1="249.5" y1="558" x2="249.5" y2="590" stroke="#fff"/>
<line x1="259.5" y1="623" x2="259.5" y2="629" stroke="#f00"/>
<circle cx="307.5" cy="572.5" r="44" stroke="#fff" fill="none"/>
<circle cx="307.5" cy="572.5" r="42" stroke="#fff" fill="none"/>
<line x1="307.5" y1="523" x2="307.5" y2="562" stroke="#f00"/>
<line x1="307.5" y1="568" x2="307.5" y2="582" stroke="#f00"/>
<line x1="307.5" y1="585" x2="307.5" y2="621" stroke="#f00"/>
<path d="M339.67,542.45 L345.05,537.07 L342.93,534.95 L337.55,540.33" stroke="#fff" fill="none" stroke-width="0.75"/>
<line x1="334.94" y1="545.06" x2="343.56" y2="536.44" stroke="#f00" stroke-width="0.75"/>
<path d="M277.45,540.33 L272.07,534.95 L269.95,537.07 L275.33,542.45" stroke="#fff" fill="none" stroke-width="0.75"/>
<line x1="280.06" y1="545.06" x2="271.44" y2="536.44" stroke="#f00" stroke-width="0.75"/>
<path d="M275.33,602.55 L269.95,607.93 L272.07,610.05 L277.45,604.67" stroke="#fff" fill="none" stroke-width="0.75"/>
<line x1="282.47" y1="597.53" x2="271.44" y2="608.56" stroke="#f00" stroke-width="0.75"/>
<path d="M337.55,604.67 L342.93,610.05 L345.05,607.93 L339.67,602.55" stroke="#fff" fill="none" stroke-width="0.75"/>
<line x1="334.94" y1="599.94" x2="343.56" y2="608.56" stroke="#f00" stroke-width="0.75"/>
<rect x="304.5" y="528" width="6" height="2.5" fill="#fff" stroke="none"/>
<rect x="304.5" y="614.5" width="6" height="2.5" fill="#fff" stroke="none"/>
<rect x="349" y="569.5" width="2.5" height="6" fill="#fff" stroke="none"/>
<rect x="263.5" y="569.5" width="2.5" height="6" fill="#fff" stroke="none"/>
<circle cx="382.5" cy="572.5" r="19" stroke="#fff" fill="none"/>
<circle cx="382.5" cy="572.5" r="12.8" stroke="#fff" fill="none"/>
<circle cx="382.5" cy="572.5" r="15.8" stroke="#f00" fill="none" stroke-dasharray="13 3 4 3"/>
<path d="M397.5,569.5 h2 l2,2 v2 l-2,2 h-2 l-2,-2 v-2 z" stroke="#fff" fill="#000"/>
<path d="M365.5,569.5 h2 l2,2 v2 l-2,2 h-2 l-2,-2 v-2 z" stroke="#fff" fill="#000"/>
<path d="M381.5,585.5 h2 l2,2 v2 l-2,2 h-2 l-2,-2 v-2 z" stroke="#fff" fill="#000"/>
<path d="M381.5,553.5 h2 l2,2 v2 l-2,2 h-2 l-2,-2 v-2 z" stroke="#fff" fill="#000"/>
<line x1="382.5" y1="551" x2="382.5" y2="593.5" stroke="#f00"/>
<circle cx="427.5" cy="572.5" r="21.2" stroke="#fff" fill="none"/>
<circle cx="427.5" cy="572.5" r="13.6" stroke="#fff" fill="none"/>
<circle cx="427.5" cy="572.5" r="17.4" stroke="#f00" fill="none" stroke-dasharray="13 3 4 3"/>
<path d="M443.5,569.5 h2 l2,2 v2 l-2,2 h-2 l-2,-2 v-2 z" stroke="#fff" fill="#000"/>
<path d="M409.5,569.5 h2 l2,2 v2 l-2,2 h-2 l-2,-2 v-2 z" stroke="#fff" fill="#000"/>
<path d="M426.5,586.5 h2 l2,2 v2 l-2,2 h-2 l-2,-2 v-2 z" stroke="#fff" fill="#000"/>
<path d="M426.5,552.5 h2 l2,2 v2 l-2,2 h-2 l-2,-2 v-2 z" stroke="#fff" fill="#000"/>
<line x1="427.5" y1="550" x2="427.5" y2="595.5" stroke="#f00"/>
<line x1="358" y1="572.5" x2="364" y2="572.5" stroke="#f00"/>
<line x1="375" y1="572.5" x2="384" y2="572.5" stroke="#f00"/>
<line x1="390" y1="572.5" x2="402" y2="572.5" stroke="#f00"/>
<line x1="405" y1="572.5" x2="428" y2="572.5" stroke="#f00"/>
<line x1="436" y1="572.5" x2="446" y2="572.5" stroke="#f00"/>
<line x1="451" y1="572.5" x2="475.5" y2="572.5" stroke="#f00"/>
<circle cx="461.5" cy="622.5" r="2.5" stroke="#fff" fill="none"/>
<line x1="461.5" y1="620" x2="461.5" y2="629" stroke="#f00"/>
<line x1="108.5" y1="658" x2="108.5" y2="678" stroke="#0ff"/>
<line x1="471.5" y1="627" x2="471.5" y2="678" stroke="#0ff"/>
<line x1="108" y1="676.5" x2="472" y2="676.5" stroke="#0ff"/>
<path d="M109,676.5 l4,-1.5 v3 z M471,676.5 l-4,-1.5 v3 z" stroke="#0ff" fill="#0ff"/>
<text x="292" y="675" fill="#0ff" stroke="#0ff" stroke-width="0.5" font-size="6" text-anchor="middle" letter-spacing="-0.5">1316.5</text>
<line x1="256.5" y1="538.5" x2="256.5" y2="607.5" stroke="#0ff"/>
<line x1="250" y1="538.5" x2="259" y2="538.5" stroke="#0ff"/>
<line x1="250" y1="607.5" x2="259.5" y2="607.5" stroke="#0ff"/>
<path d="M256.5,539 l-1.5,4 h3 z M256.5,607 l-1.5,-4 h3 z" stroke="#0ff" fill="#0ff"/>
<text x="255.5" y="572.5" fill="#0ff" stroke="#0ff" stroke-width="0.5" font-size="6" text-anchor="middle" letter-spacing="-0.5" transform="rotate(-90 255.5 572.5)">335</text>
<line x1="266" y1="508.5" x2="275" y2="508.5" stroke="#0ff"/>
<rect x="632.5" y="83.5" width="20" height="9" stroke="#fff" fill="none"/>
<rect x="623.5" y="92.5" width="39" height="20" stroke="#fff" fill="none"/>
<rect x="629.5" y="91" width="5" height="1" fill="#fff" stroke="none"/>
<rect x="630" y="90" width="3.5" height="1" fill="#fff" stroke="none"/>
<rect x="637" y="91" width="4" height="1" fill="#fff" stroke="none"/>
<rect x="637.5" y="90" width="2.5" height="1" fill="#fff" stroke="none"/>
<rect x="645" y="91" width="3" height="1" fill="#fff" stroke="none"/>
<rect x="645.5" y="90" width="1.5" height="1" fill="#fff" stroke="none"/>
<rect x="651" y="91" width="5.5" height="1" fill="#fff" stroke="none"/>
<rect x="651.5" y="90" width="4" height="1" fill="#fff" stroke="none"/>
<line x1="623.5" y1="94.5" x2="662.5" y2="94.5" stroke="#fff"/>
<path d="M623.5,95.5 H600.5 V143.5 M662.5,95.5 H685.5 V143.5" stroke="#fff" fill="none"/>
<line x1="624.5" y1="112.5" x2="624.5" y2="143.5" stroke="#fff"/>
<line x1="661.5" y1="112.5" x2="661.5" y2="143.5" stroke="#fff"/>
<line x1="632.5" y1="92.5" x2="632.5" y2="143.5" stroke="#fff"/>
<line x1="652.5" y1="92.5" x2="652.5" y2="143.5" stroke="#fff"/>
<line x1="590" y1="143.5" x2="695" y2="143.5" stroke="#fff"/>
<line x1="590.5" y1="143.5" x2="590.5" y2="384.5" stroke="#fff"/>
<line x1="694.5" y1="143.5" x2="694.5" y2="393" stroke="#fff"/>
<circle cx="642.5" cy="103.3" r="6.5" stroke="#fff" fill="none"/>
<circle cx="642.5" cy="103.3" r="4.8" stroke="#fff" fill="none"/>
<line x1="638" y1="103.5" x2="650" y2="103.5" stroke="#f00"/>
<line x1="642.5" y1="80" x2="642.5" y2="128" stroke="#f00"/>
<line x1="642.5" y1="136" x2="642.5" y2="143" stroke="#f00"/>
<line x1="642.5" y1="151" x2="642.5" y2="190" stroke="#f00"/>
<line x1="642.5" y1="197" x2="642.5" y2="204.5" stroke="#f00"/>
<line x1="642.5" y1="210" x2="642.5" y2="250" stroke="#f00"/>
<line x1="642.5" y1="256.5" x2="642.5" y2="266" stroke="#f00"/>
<line x1="642.5" y1="272" x2="642.5" y2="310.5" stroke="#f00"/>
<line x1="642.5" y1="317" x2="642.5" y2="326" stroke="#f00"/>
<line x1="642.5" y1="332" x2="642.5" y2="402" stroke="#f00"/>
<line x1="642.5" y1="408.5" x2="642.5" y2="417" stroke="#f00"/>
<line x1="642.5" y1="423.5" x2="642.5" y2="444.5" stroke="#f00"/>
<path d="M590.5,384.3 C600,381.5 611,379.3 623.5,379.3 C645,379.3 665,393.5 684,393.5 L694.5,392.8" stroke="#fff" fill="none"/>
<path d="M590.5,388.2 C600,385 611,382.7 623.5,382.7 C645,382.7 666,397 686,397 L694.5,396" stroke="#fff" fill="none"/>
<path d="M590.5,388.2 V407.5 Q590.5,410.5 587.5,410.5 H556.5 Q553.5,410.5 553.5,413.5 V458.3 C570,460 585,464.5 601,464.5 C622,464.5 636,457.6 656.5,457.6 L733.5,457.8 V413.5 Q733.5,410.5 730.5,410.5 H698 Q695,410.5 695,407.5 V396" stroke="#fff" fill="none"/>
<line x1="652.5" y1="83.5" x2="771" y2="83.5" stroke="#0ff"/>
<line x1="768.5" y1="83.5" x2="768.5" y2="443" stroke="#0ff"/>
<line x1="691" y1="143.5" x2="749" y2="143.5" stroke="#0ff"/>
<line x1="746.5" y1="143.5" x2="746.5" y2="445.5" stroke="#0ff"/>
<rect x="767" y="86" width="2" height="3" fill="#0ff" stroke="none"/>
<rect x="745" y="146" width="2" height="3" fill="#0ff" stroke="none"/>
<rect x="746" y="457" width="1" height="1" fill="#0ff" stroke="none"/>
<rect x="768" y="457" width="1" height="1" fill="#0ff" stroke="none"/>
<text x="746" y="441" fill="#0ff" stroke="#0ff" stroke-width="0.5" font-size="6" text-anchor="middle" letter-spacing="-0.5" transform="rotate(-90 746 441)">1200</text>
<text x="768" y="439" fill="#0ff" stroke="#0ff" stroke-width="0.5" font-size="6" text-anchor="middle" letter-spacing="-0.5" transform="rotate(-90 768 439)">1648</text>
<line x1="551.5" y1="462" x2="551.5" y2="502" stroke="#0ff"/>
<line x1="730.5" y1="462" x2="730.5" y2="502" stroke="#0ff"/>
<line x1="551" y1="499.5" x2="731" y2="499.5" stroke="#0ff"/>
<path d="M552,499.5 l4,-1.5 v3 z M730,499.5 l-4,-1.5 v3 z" stroke="#0ff" fill="#0ff"/>
<text x="641.5" y="498" fill="#0ff" stroke="#0ff" stroke-width="0.5" font-size="6" text-anchor="middle" letter-spacing="-0.5">900</text>
<text x="905.5" y="211" fill="#0ff" stroke="#0ff" stroke-width="0.5" font-size="6" text-anchor="middle">I</text>
<line x1="900" y1="212.5" x2="911" y2="212.5" stroke="#0ff"/>
<text x="906" y="219" fill="#0ff" stroke="#0ff" stroke-width="0.5" font-size="5.5" text-anchor="middle" letter-spacing="-0.4">5:1</text>
<clipPath id="h1"><path d="M888,238 L891,233.5 L895.5,230 L905,227.5 L919.5,229 V312.5 H904.5 L901.5,308 V305.5 H919.5 V300.5 H901.5 V256.5 H919.5 V251.5 H901.5 V247.5 H889.5 V251 H901.5 V241.5 Q901,238 897.5,238 Z"/></clipPath>
<g clip-path="url(#h1)">
<line x1="733.7" y1="320" x2="833.7" y2="220" stroke="#0f0" stroke-width="0.75"/>
<line x1="741.6" y1="320" x2="841.6" y2="220" stroke="#0f0" stroke-width="0.75"/>
<line x1="749.5" y1="320" x2="849.5" y2="220" stroke="#0f0" stroke-width="0.75"/>
<line x1="757.4" y1="320" x2="857.4" y2="220" stroke="#0f0" stroke-width="0.75"/>
<line x1="765.3" y1="320" x2="865.3" y2="220" stroke="#0f0" stroke-width="0.75"/>
<line x1="773.2" y1="320" x2="873.2" y2="220" stroke="#0f0" stroke-width="0.75"/>
<line x1="781.1" y1="320" x2="881.1" y2="220" stroke="#0f0" stroke-width="0.75"/>
<line x1="789" y1="320" x2="889" y2="220" stroke="#0f0" stroke-width="0.75"/>
<line x1="796.9" y1="320" x2="896.9" y2="220" stroke="#0f0" stroke-width="0.75"/>
<line x1="804.8" y1="320" x2="904.8" y2="220" stroke="#0f0" stroke-width="0.75"/>
<line x1="812.7" y1="320" x2="912.7" y2="220" stroke="#0f0" stroke-width="0.75"/>
<line x1="820.6" y1="320" x2="920.6" y2="220" stroke="#0f0" stroke-width="0.75"/>
<line x1="828.5" y1="320" x2="928.5" y2="220" stroke="#0f0" stroke-width="0.75"/>
<line x1="836.4" y1="320" x2="936.4" y2="220" stroke="#0f0" stroke-width="0.75"/>
<line x1="844.3" y1="320" x2="944.3" y2="220" stroke="#0f0" stroke-width="0.75"/>
<line x1="852.2" y1="320" x2="952.2" y2="220" stroke="#0f0" stroke-width="0.75"/>
<line x1="860.1" y1="320" x2="960.1" y2="220" stroke="#0f0" stroke-width="0.75"/>
<line x1="868" y1="320" x2="968" y2="220" stroke="#0f0" stroke-width="0.75"/>
<line x1="875.9" y1="320" x2="975.9" y2="220" stroke="#0f0" stroke-width="0.75"/>
<line x1="883.8" y1="320" x2="983.8" y2="220" stroke="#0f0" stroke-width="0.75"/>
<line x1="891.7" y1="320" x2="991.7" y2="220" stroke="#0f0" stroke-width="0.75"/>
<line x1="899.6" y1="320" x2="999.6" y2="220" stroke="#0f0" stroke-width="0.75"/>
<line x1="907.5" y1="320" x2="1007.5" y2="220" stroke="#0f0" stroke-width="0.75"/>
<line x1="915.4" y1="320" x2="1015.4" y2="220" stroke="#0f0" stroke-width="0.75"/>
<line x1="923.3" y1="320" x2="1023.3" y2="220" stroke="#0f0" stroke-width="0.75"/>
<line x1="931.2" y1="320" x2="1031.2" y2="220" stroke="#0f0" stroke-width="0.75"/>
</g>
<clipPath id="h2"><path d="M877.5,259.5 H899.5 V297.5 H889.5 V295.5 H877.5 V287.5 L878.5,284.5 H882.5 L884.5,287.5 H887.5 L889.5,284.5 V270.5 L887.5,267.5 H884.5 L882.5,270.5 H878.5 L877.5,267.5 Z"/></clipPath>
<g clip-path="url(#h2)">
<line x1="806" y1="220" x2="906" y2="320" stroke="#0f0" stroke-width="0.75"/>
<line x1="813.9" y1="220" x2="913.9" y2="320" stroke="#0f0" stroke-width="0.75"/>
<line x1="821.8" y1="220" x2="921.8" y2="320" stroke="#0f0" stroke-width="0.75"/>
<line x1="829.7" y1="220" x2="929.7" y2="320" stroke="#0f0" stroke-width="0.75"/>
<line x1="837.6" y1="220" x2="937.6" y2="320" stroke="#0f0" stroke-width="0.75"/>
<line x1="845.5" y1="220" x2="945.5" y2="320" stroke="#0f0" stroke-width="0.75"/>
<line x1="853.4" y1="220" x2="953.4" y2="320" stroke="#0f0" stroke-width="0.75"/>
<line x1="861.3" y1="220" x2="961.3" y2="320" stroke="#0f0" stroke-width="0.75"/>
<line x1="869.2" y1="220" x2="969.2" y2="320" stroke="#0f0" stroke-width="0.75"/>
<line x1="877.1" y1="220" x2="977.1" y2="320" stroke="#0f0" stroke-width="0.75"/>
<line x1="885" y1="220" x2="985" y2="320" stroke="#0f0" stroke-width="0.75"/>
<line x1="892.9" y1="220" x2="992.9" y2="320" stroke="#0f0" stroke-width="0.75"/>
<line x1="900.8" y1="220" x2="1000.8" y2="320" stroke="#0f0" stroke-width="0.75"/>
<line x1="908.7" y1="220" x2="1008.7" y2="320" stroke="#0f0" stroke-width="0.75"/>
<line x1="916.6" y1="220" x2="1016.6" y2="320" stroke="#0f0" stroke-width="0.75"/>
<line x1="924.5" y1="220" x2="1024.5" y2="320" stroke="#0f0" stroke-width="0.75"/>
</g>
<path d="M888,238 L891,233.5 L895.5,230 L905,227.5 L919.5,229" stroke="#fff" fill="none"/>
<line x1="919.5" y1="229" x2="919.5" y2="312" stroke="#fff"/>
<path d="M919.5,229 C926,230 930,234 931.5,238.7 C934,244 936.5,249 936.5,254.4 V283 L935.5,285 L936.5,287 V312.5 H904.5 L901.5,308 V305.5" stroke="#fff" fill="none"/>
<path d="M888,238.5 H897.5 Q901.5,238.5 901.5,241.5 V247.5" stroke="#fff" fill="none"/>
<rect x="889" y="250.5" width="31" height="1" fill="#fff" stroke="none"/>
<rect x="889" y="255.5" width="31" height="1.5" fill="#fff" stroke="none"/>
<rect x="883.5" y="248.5" width="6" height="10" stroke="#fff" fill="none"/>
<path d="M886.5,250.5 H884.5 V256.5 H886.5 M884.5,253.5 H886.5" stroke="#00f" fill="none"/>
<rect x="886" y="250" width="1" height="7" fill="#00f" stroke="none"/>
<line x1="879" y1="253.5" x2="922" y2="253.5" stroke="#f00"/>
<line x1="914.5" y1="251" x2="914.5" y2="256" stroke="#fff"/>
<rect x="889" y="299.5" width="31" height="1" fill="#fff" stroke="none"/>
<rect x="889" y="304.5" width="31" height="1.5" fill="#fff" stroke="none"/>
<rect x="883.5" y="297.5" width="6" height="10" stroke="#fff" fill="none"/>
<path d="M886.5,299.5 H884.5 V305.5 H886.5 M884.5,302.5 H886.5" stroke="#00f" fill="none"/>
<rect x="886" y="299" width="1" height="7" fill="#00f" stroke="none"/>
<line x1="879" y1="302.5" x2="922" y2="302.5" stroke="#f00"/>
<line x1="914.5" y1="300" x2="914.5" y2="305" stroke="#fff"/>
<line x1="889.5" y1="247.5" x2="901.6" y2="247.5" stroke="#fff"/>
<line x1="889.5" y1="307.5" x2="901.6" y2="307.5" stroke="#fff"/>
<path d="M889.5,259.5 H877.5 M889.5,295.5 H877.5 V287.5 L878.5,284.5 H882.5 L884.5,287.5 H887.5 L889.5,284.5 V270.5 L887.5,267.5 H884.5 L882.5,270.5 H878.5 L877.5,267.5" stroke="#fff" fill="none"/>
<path d="M877.5,259.5 V267.5" stroke="#fff" fill="none"/>
<line x1="899.5" y1="259.5" x2="899.5" y2="274" stroke="#fff"/>
<line x1="899.5" y1="281.5" x2="899.5" y2="298" stroke="#fff"/>
<line x1="901.5" y1="256.5" x2="901.5" y2="274" stroke="#fff"/>
<line x1="901.5" y1="281.5" x2="901.5" y2="300.5" stroke="#fff"/>
<path d="M877,267.5 H871.5 V272.5 M871.5,283 V287.5 H877" stroke="#c60" fill="none"/>
<rect x="871" y="275" width="1" height="1" fill="#c60" stroke="none"/>
<rect x="871" y="279" width="1" height="1" fill="#c60" stroke="none"/>
<line x1="869" y1="277.5" x2="929" y2="277.5" stroke="#f00"/>
<line x1="849" y1="253.5" x2="879" y2="253.5" stroke="#0ff"/>
<line x1="849" y1="302.5" x2="879" y2="302.5" stroke="#0ff"/>
<line x1="851.5" y1="253.5" x2="851.5" y2="302.5" stroke="#0ff"/>
<rect x="850.5" y="255" width="2" height="3" fill="#0ff" stroke="none"/>
<rect x="850.5" y="298" width="2" height="3" fill="#0ff" stroke="none"/>
<text x="850.5" y="278" fill="#0ff" stroke="#0ff" stroke-width="0.5" font-size="6" text-anchor="middle" letter-spacing="-0.5" transform="rotate(-90 850.5 278)">75</text>
<line x1="792.5" y1="395.5" x2="1007.5" y2="395.5" stroke="#fff"/>
<line x1="792.5" y1="404.5" x2="1007.5" y2="404.5" stroke="#fff"/>
<line x1="792.5" y1="412.5" x2="1007.5" y2="412.5" stroke="#fff"/>
<line x1="792.5" y1="420.5" x2="1007.5" y2="420.5" stroke="#fff"/>
<line x1="792.5" y1="429.5" x2="1007.5" y2="429.5" stroke="#fff"/>
<line x1="792.5" y1="437.5" x2="1007.5" y2="437.5" stroke="#fff"/>
<line x1="792.5" y1="446.5" x2="1007.5" y2="446.5" stroke="#fff"/>
<line x1="792.5" y1="454.5" x2="1007.5" y2="454.5" stroke="#fff"/>
<line x1="792.5" y1="463.5" x2="1007.5" y2="463.5" stroke="#fff"/>
<line x1="792.5" y1="475.5" x2="1007.5" y2="475.5" stroke="#fff"/>
<line x1="792.5" y1="484.5" x2="1007.5" y2="484.5" stroke="#fff"/>
<line x1="792.5" y1="492.5" x2="1007.5" y2="492.5" stroke="#fff"/>
<line x1="792.5" y1="500.5" x2="1007.5" y2="500.5" stroke="#fff"/>
<line x1="792.5" y1="509.5" x2="1007.5" y2="509.5" stroke="#fff"/>
<line x1="792.5" y1="517.5" x2="1007.5" y2="517.5" stroke="#fff"/>
<line x1="792.5" y1="525.5" x2="1007.5" y2="525.5" stroke="#fff"/>
<line x1="792.5" y1="534.5" x2="1007.5" y2="534.5" stroke="#fff"/>
<line x1="792.5" y1="542.5" x2="1007.5" y2="542.5" stroke="#fff"/>
<line x1="792.5" y1="550.5" x2="1007.5" y2="550.5" stroke="#fff"/>
<line x1="792.5" y1="558.5" x2="1007.5" y2="558.5" stroke="#fff"/>
<line x1="792.5" y1="567.5" x2="1007.5" y2="567.5" stroke="#fff"/>
<line x1="792.5" y1="575.5" x2="1007.5" y2="575.5" stroke="#fff"/>
<line x1="792.5" y1="583.5" x2="1007.5" y2="583.5" stroke="#fff"/>
<line x1="792.5" y1="592.5" x2="1007.5" y2="592.5" stroke="#fff"/>
<line x1="792.5" y1="600.5" x2="1007.5" y2="600.5" stroke="#fff"/>
<line x1="792.5" y1="608.5" x2="1007.5" y2="608.5" stroke="#fff"/>
<line x1="792.5" y1="617.5" x2="1007.5" y2="617.5" stroke="#fff"/>
<line x1="792.5" y1="625.5" x2="1007.5" y2="625.5" stroke="#fff"/>
<line x1="792.5" y1="634.5" x2="1007.5" y2="634.5" stroke="#fff"/>
<line x1="792.5" y1="650.5" x2="1007.5" y2="650.5" stroke="#fff"/>
<line x1="792.5" y1="395.5" x2="792.5" y2="650.5" stroke="#fff"/>
<line x1="804.5" y1="395.5" x2="804.5" y2="650.5" stroke="#fff"/>
<line x1="849.5" y1="395.5" x2="849.5" y2="650.5" stroke="#fff"/>
<line x1="901.5" y1="395.5" x2="901.5" y2="650.5" stroke="#fff"/>
<line x1="911.5" y1="395.5" x2="911.5" y2="650.5" stroke="#fff"/>
<line x1="956.5" y1="395.5" x2="956.5" y2="650.5" stroke="#fff"/>
<line x1="968.5" y1="395.5" x2="968.5" y2="650.5" stroke="#fff"/>
<line x1="983.5" y1="395.5" x2="983.5" y2="650.5" stroke="#fff"/>
<rect x="957" y="634.5" width="26" height="15.5" fill="#000" stroke="none"/>
<line x1="968.5" y1="634" x2="968.5" y2="642.5" stroke="#fff"/>
<line x1="956.5" y1="642.5" x2="983.5" y2="642.5" stroke="#fff"/>
<g font-family='"Liberation Sans","Noto Sans CJK SC",sans-serif' fill="#ff0" font-weight="bold" stroke="#ff0" stroke-width="0.3">
<text x="798.5" y="401.3" font-size="5" text-anchor="middle" letter-spacing="-0.3">28</text>
<text x="870.5" y="401.3" font-size="5" textLength="11.7" lengthAdjust="spacingAndGlyphs">工作台</text>
<text x="906.8" y="401.3" font-size="5.5" text-anchor="middle" letter-spacing="-0.3">1</text>
<text x="798.5" y="409.8" font-size="5" text-anchor="middle" letter-spacing="-0.3">27</text>
<text x="870.5" y="409.8" font-size="5" textLength="15.6" lengthAdjust="spacingAndGlyphs">调整垫片</text>
<text x="906.8" y="409.8" font-size="5.5" text-anchor="middle" letter-spacing="-0.3">2</text>
<text x="932.5" y="409.8" font-size="5" letter-spacing="-0.3">45</text>
<text x="798.5" y="417.8" font-size="5" text-anchor="middle" letter-spacing="-0.3">26</text>
<text x="870.5" y="417.8" font-size="5" textLength="7.8" lengthAdjust="spacingAndGlyphs">压盖</text>
<text x="906.8" y="417.8" font-size="5.5" text-anchor="middle" letter-spacing="-0.3">1</text>
<text x="932.5" y="417.8" font-size="5" letter-spacing="-0.3">45</text>
<text x="798.5" y="426.3" font-size="5" text-anchor="middle" letter-spacing="-0.3">25</text>
<text x="870.5" y="426.3" font-size="5" textLength="15.6" lengthAdjust="spacingAndGlyphs">减速箱体</text>
<text x="906.8" y="426.3" font-size="5.5" text-anchor="middle" letter-spacing="-0.3">1</text>
<text x="932.5" y="426.3" font-size="5" letter-spacing="-0.3">HT200</text>
<text x="798.5" y="434.8" font-size="5" text-anchor="middle" letter-spacing="-0.3">24</text>
<text x="870.5" y="434.8" font-size="5" textLength="15.6" lengthAdjust="spacingAndGlyphs">减速箱盖</text>
<text x="906.8" y="434.8" font-size="5.5" text-anchor="middle" letter-spacing="-0.3">1</text>
<text x="932.5" y="434.8" font-size="5" letter-spacing="-0.3">HT200</text>
<text x="798.5" y="443.3" font-size="5" text-anchor="middle" letter-spacing="-0.3">23</text>
<text x="870.5" y="443.3" font-size="5" textLength="11.7" lengthAdjust="spacingAndGlyphs">大齿轮</text>
<text x="906.8" y="443.3" font-size="5.5" text-anchor="middle" letter-spacing="-0.3">1</text>
<text x="932.5" y="443.3" font-size="5" letter-spacing="-0.3">40Cr</text>
<text x="995" y="443.3" font-size="4.6" text-anchor="middle" letter-spacing="-0.3">m=2,z=80</text>
<text x="798.5" y="451.8" font-size="5" text-anchor="middle" letter-spacing="-0.3">22</text>
<text x="870.5" y="451.8" font-size="5" textLength="3.9" lengthAdjust="spacingAndGlyphs">轴</text>
<text x="906.8" y="451.8" font-size="5.5" text-anchor="middle" letter-spacing="-0.3">1</text>
<text x="932.5" y="451.8" font-size="5" letter-spacing="-0.3">45</text>
<text x="798.5" y="460.3" font-size="5" text-anchor="middle" letter-spacing="-0.3">21</text>
<text x="870.5" y="460.3" font-size="5" textLength="11.7" lengthAdjust="spacingAndGlyphs">轴承座</text>
<text x="906.8" y="460.3" font-size="5.5" text-anchor="middle" letter-spacing="-0.3">1</text>
<text x="932.5" y="460.3" font-size="5" letter-spacing="-0.3">HT200</text>
<text x="798.5" y="468.8" font-size="5" text-anchor="middle" letter-spacing="-0.3">20</text>
<text x="870.5" y="468.8" font-size="5" textLength="7.8" lengthAdjust="spacingAndGlyphs">端盖</text>
<text x="906.8" y="468.8" font-size="5.5" text-anchor="middle" letter-spacing="-0.3">1</text>
<text x="932.5" y="468.8" font-size="5" letter-spacing="-0.3">45</text>
<text x="798.5" y="481.3" font-size="5" text-anchor="middle" letter-spacing="-0.3">19</text>
<text x="827" y="481.3" font-size="5" text-anchor="middle" textLength="44.5" lengthAdjust="spacingAndGlyphs">GB/T5782 M12X120X30</text>
<text x="870.5" y="481.3" font-size="5" textLength="7.8" lengthAdjust="spacingAndGlyphs">螺栓</text>
<text x="906.8" y="481.3" font-size="5.5" text-anchor="middle" letter-spacing="-0.3">4</text>
<text x="932.5" y="481.3" font-size="5" letter-spacing="-0.3">45</text>
<text x="798.5" y="489.3" font-size="5" text-anchor="middle" letter-spacing="-0.3">18</text>
<text x="870.5" y="489.3" font-size="5" textLength="7.8" lengthAdjust="spacingAndGlyphs">皮带</text>
<text x="906.8" y="489.3" font-size="5.5" text-anchor="middle" letter-spacing="-0.3">2</text>
<text x="932.5" y="489.3" font-size="5" letter-spacing="-0.3">T橡胶</text>
<text x="798.5" y="497.8" font-size="5" text-anchor="middle" letter-spacing="-0.3">17</text>
<text x="870.5" y="497.8" font-size="5" textLength="7.8" lengthAdjust="spacingAndGlyphs">带轮</text>
<text x="906.8" y="497.8" font-size="5.5" text-anchor="middle" letter-spacing="-0.3">1</text>
<text x="932.5" y="497.8" font-size="5" letter-spacing="-0.3">HT200</text>
<text x="798.5" y="506.3" font-size="5" text-anchor="middle" letter-spacing="-0.3">16</text>
<text x="870.5" y="506.3" font-size="5" textLength="7.8" lengthAdjust="spacingAndGlyphs">带轮</text>
<text x="906.8" y="506.3" font-size="5.5" text-anchor="middle" letter-spacing="-0.3">1</text>
<text x="932.5" y="506.3" font-size="5" letter-spacing="-0.3">HT200</text>
<text x="798.5" y="514.8" font-size="5" text-anchor="middle" letter-spacing="-0.3">15</text>
<text x="870.5" y="514.8" font-size="5" textLength="11.7" lengthAdjust="spacingAndGlyphs">连接座</text>
<text x="906.8" y="514.8" font-size="5.5" text-anchor="middle" letter-spacing="-0.3">1</text>
<text x="932.5" y="514.8" font-size="5" letter-spacing="-0.3">HT200</text>
<text x="798.5" y="522.8" font-size="5" text-anchor="middle" letter-spacing="-0.3">14</text>
<text x="827" y="522.8" font-size="5" text-anchor="middle" textLength="44.5" lengthAdjust="spacingAndGlyphs">GB/T5782 M20X130X46</text>
<text x="870.5" y="522.8" font-size="5" textLength="7.8" lengthAdjust="spacingAndGlyphs">螺栓</text>
<text x="906.8" y="522.8" font-size="5.5" text-anchor="middle" letter-spacing="-0.3">4</text>
<text x="932.5" y="522.8" font-size="5" letter-spacing="-0.3">45</text>
<text x="798.5" y="531.3" font-size="5" text-anchor="middle" letter-spacing="-0.3">13</text>
<text x="827" y="531.3" font-size="5" text-anchor="middle" textLength="26.4" lengthAdjust="spacingAndGlyphs">GB/T97.1 20</text>
<text x="870.5" y="531.3" font-size="5" textLength="7.8" lengthAdjust="spacingAndGlyphs">垫圈</text>
<text x="906.8" y="531.3" font-size="5.5" text-anchor="middle" letter-spacing="-0.3">4</text>
<text x="932.5" y="531.3" font-size="5" letter-spacing="-0.3">45</text>
<text x="798.5" y="539.3" font-size="5" text-anchor="middle" letter-spacing="-0.3">12</text>
<text x="827" y="539.3" font-size="5" text-anchor="middle" textLength="28.8" lengthAdjust="spacingAndGlyphs">GB/T6170 M20</text>
<text x="870.5" y="539.3" font-size="5" textLength="7.8" lengthAdjust="spacingAndGlyphs">螺母</text>
<text x="906.8" y="539.3" font-size="5.5" text-anchor="middle" letter-spacing="-0.3">4</text>
<text x="932.5" y="539.3" font-size="5" letter-spacing="-0.3">45</text>
<text x="798.5" y="547.8" font-size="5" text-anchor="middle" letter-spacing="-0.3">11</text>
<text x="827" y="547.8" font-size="5" text-anchor="middle" textLength="28.8" lengthAdjust="spacingAndGlyphs">Y132 S2-2-B5</text>
<text x="870.5" y="547.8" font-size="5" textLength="11.7" lengthAdjust="spacingAndGlyphs">电动机</text>
<text x="906.8" y="547.8" font-size="5.5" text-anchor="middle" letter-spacing="-0.3">1</text>
<text x="798.5" y="555.8" font-size="5" text-anchor="middle" letter-spacing="-0.3">10</text>
<text x="827" y="555.8" font-size="5" text-anchor="middle" textLength="21.6" lengthAdjust="spacingAndGlyphs">HSG-F-C80</text>
<text x="860.5" y="555.8" font-size="5" textLength="31" lengthAdjust="spacingAndGlyphs">双作用单杆液压缸</text>
<text x="906.8" y="555.8" font-size="5.5" text-anchor="middle" letter-spacing="-0.3">1</text>
<text x="798.5" y="564.3" font-size="5" text-anchor="middle" letter-spacing="-0.3">9</text>
<text x="827" y="564.3" font-size="5" text-anchor="middle" textLength="43.2" lengthAdjust="spacingAndGlyphs">GB/T5783 M10X30X30</text>
<text x="870.5" y="564.3" font-size="5" textLength="7.8" lengthAdjust="spacingAndGlyphs">螺栓</text>
<text x="906.8" y="564.3" font-size="5.5" text-anchor="middle" letter-spacing="-0.3">8</text>
<text x="932.5" y="564.3" font-size="5" letter-spacing="-0.3">45</text>
<text x="798.5" y="572.3" font-size="5" text-anchor="middle" letter-spacing="-0.3">8</text>
<text x="827" y="572.3" font-size="5" text-anchor="middle" textLength="38.4" lengthAdjust="spacingAndGlyphs">GB/T1096-1996 50</text>
<text x="870.5" y="572.3" font-size="5" textLength="11.7" lengthAdjust="spacingAndGlyphs">连接块</text>
<text x="906.8" y="572.3" font-size="5.5" text-anchor="middle" letter-spacing="-0.3">1</text>
<text x="932.5" y="572.3" font-size="5" letter-spacing="-0.3">40Mn</text>
<text x="798.5" y="580.8" font-size="5" text-anchor="middle" letter-spacing="-0.3">7</text>
<text x="870.5" y="580.8" font-size="5" textLength="7.8" lengthAdjust="spacingAndGlyphs">V带</text>
<text x="906.8" y="580.8" font-size="5.5" text-anchor="middle" letter-spacing="-0.3">4</text>
<text x="798.5" y="589.3" font-size="5" text-anchor="middle" letter-spacing="-0.3">6</text>
<text x="827" y="589.3" font-size="5" text-anchor="middle" textLength="21.6" lengthAdjust="spacingAndGlyphs">HSA 30 LA</text>
<text x="870.5" y="589.3" font-size="5" textLength="7.8" lengthAdjust="spacingAndGlyphs">滑块</text>
<text x="906.8" y="589.3" font-size="5.5" text-anchor="middle" letter-spacing="-0.3">4</text>
<text x="798.5" y="597.8" font-size="5" text-anchor="middle" letter-spacing="-0.3">5</text>
<text x="870.5" y="597.8" font-size="5" textLength="7.8" lengthAdjust="spacingAndGlyphs">挡块</text>
<text x="906.8" y="597.8" font-size="5.5" text-anchor="middle" letter-spacing="-0.3">1</text>
<text x="932.5" y="597.8" font-size="5" letter-spacing="-0.3">45</text>
<text x="798.5" y="605.8" font-size="5" text-anchor="middle" letter-spacing="-0.3">4</text>
<text x="798.5" y="614.3" font-size="5" text-anchor="middle" letter-spacing="-0.3">3</text>
<text x="827" y="614.3" font-size="5" text-anchor="middle" textLength="36" lengthAdjust="spacingAndGlyphs">GB/T70.1 M10X25</text>
<text x="860.5" y="614.3" font-size="5" textLength="31" lengthAdjust="spacingAndGlyphs">内六角圆柱头螺钉</text>
<text x="906.8" y="614.3" font-size="5.5" text-anchor="middle" letter-spacing="-0.3">16</text>
<text x="932.5" y="614.3" font-size="5" letter-spacing="-0.3">45</text>
<text x="798.5" y="622.8" font-size="5" text-anchor="middle" letter-spacing="-0.3">2</text>
<text x="827" y="622.8" font-size="5" text-anchor="middle" textLength="21.6" lengthAdjust="spacingAndGlyphs">HSA 30 LA</text>
<text x="870.5" y="622.8" font-size="5" textLength="7.8" lengthAdjust="spacingAndGlyphs">导轨</text>
<text x="906.8" y="622.8" font-size="5.5" text-anchor="middle" letter-spacing="-0.3">2</text>
<text x="798.5" y="631.3" font-size="5" text-anchor="middle" letter-spacing="-0.3">1</text>
<text x="870.5" y="631.3" font-size="5" textLength="7.8" lengthAdjust="spacingAndGlyphs">床身</text>
<text x="906.8" y="631.3" font-size="5.5" text-anchor="middle" letter-spacing="-0.3">1</text>
<text x="932.5" y="631.3" font-size="5" letter-spacing="-0.3">HT200</text>
<text x="796" y="641" font-size="6" textLength="5" lengthAdjust="spacingAndGlyphs">序</text>
<text x="796" y="649" font-size="6" textLength="5" lengthAdjust="spacingAndGlyphs">号</text>
<text x="811" y="646.5" font-size="9" textLength="5.5" lengthAdjust="spacingAndGlyphs">代</text>
<text x="829" y="646.5" font-size="9" textLength="5.5" lengthAdjust="spacingAndGlyphs">号</text>
<text x="862.5" y="646.5" font-size="9" textLength="5.5" lengthAdjust="spacingAndGlyphs">名</text>
<text x="883.5" y="646.5" font-size="9" textLength="6" lengthAdjust="spacingAndGlyphs">称</text>
<text x="904.5" y="641.5" font-size="6" textLength="4" lengthAdjust="spacingAndGlyphs">数</text>
<text x="904.5" y="649.5" font-size="6" textLength="4" lengthAdjust="spacingAndGlyphs">量</text>
<text x="921" y="646.5" font-size="9" textLength="6" lengthAdjust="spacingAndGlyphs">材</text>
<text x="942" y="646.5" font-size="9" textLength="6" lengthAdjust="spacingAndGlyphs">料</text>
<text x="959" y="640.5" font-size="5" textLength="7" lengthAdjust="spacingAndGlyphs">单件</text>
<text x="972" y="640.5" font-size="5" textLength="7" lengthAdjust="spacingAndGlyphs">总计</text>
<text x="961" y="649.5" font-size="5.5" textLength="3.5" lengthAdjust="spacingAndGlyphs">重</text>
<text x="973" y="649.5" font-size="5.5" textLength="3.5" lengthAdjust="spacingAndGlyphs">量</text>
<text x="989" y="645.5" font-size="8" textLength="12.5" lengthAdjust="spacingAndGlyphs">备注</text>
<text x="794" y="682.5" font-size="4.6" textLength="6" lengthAdjust="spacingAndGlyphs">标记</text>
<text x="807" y="682.5" font-size="4.6" textLength="6" lengthAdjust="spacingAndGlyphs">处数</text>
<text x="822" y="682.5" font-size="4.6" textLength="6" lengthAdjust="spacingAndGlyphs">分区</text>
<text x="836.5" y="682.5" font-size="4.6" textLength="14.5" lengthAdjust="spacingAndGlyphs">更改文件号</text>
<text x="858" y="682.5" font-size="4.6" textLength="6" lengthAdjust="spacingAndGlyphs">签名</text>
<text x="870" y="682.5" font-size="4.6" textLength="16" lengthAdjust="spacingAndGlyphs">年、月、日</text>
<text x="795" y="691" font-size="4.6" textLength="6" lengthAdjust="spacingAndGlyphs">设计</text>
<text x="808.5" y="691" font-size="4.6" textLength="9.5" lengthAdjust="spacingAndGlyphs">(签名)</text>
<text x="822" y="691" font-size="4.6" textLength="16" lengthAdjust="spacingAndGlyphs">(年月日)</text>
<text x="842" y="691" font-size="4.6" textLength="9" lengthAdjust="spacingAndGlyphs">标准化</text>
<text x="857" y="691" font-size="4.6" textLength="8" lengthAdjust="spacingAndGlyphs">(签名)</text>
<text x="870" y="691" font-size="4.6" textLength="16.5" lengthAdjust="spacingAndGlyphs">(年月日)</text>
<text x="844" y="715.5" font-size="4.6" textLength="6" lengthAdjust="spacingAndGlyphs">批准</text>
<text x="795" y="707.5" font-size="4.6" textLength="6" lengthAdjust="spacingAndGlyphs">审核</text>
<text x="795" y="715.5" font-size="4.6" textLength="6" lengthAdjust="spacingAndGlyphs">工艺</text>
<text x="900" y="693.5" font-size="4.6" textLength="12" lengthAdjust="spacingAndGlyphs">阶段标记</text>
<text x="922" y="693.5" font-size="4.6" textLength="6" lengthAdjust="spacingAndGlyphs">重量</text>
<text x="936" y="693.5" font-size="4.6" textLength="8" lengthAdjust="spacingAndGlyphs">比例</text>
<text x="923.5" y="703.5" font-size="4.2" textLength="4.5" lengthAdjust="spacingAndGlyphs">1:4</text>
<text x="899" y="715" font-size="5" textLength="12" lengthAdjust="spacingAndGlyphs">共 1 张</text>
<text x="930" y="715" font-size="5" textLength="12" lengthAdjust="spacingAndGlyphs">第 1 张</text>
<text x="963.5" y="688.5" font-size="9" textLength="23.5" lengthAdjust="spacingAndGlyphs">总装配图</text>
<text x="978.5" y="709" font-size="9.5" text-anchor="middle" font-weight="normal" textLength="20" lengthAdjust="spacingAndGlyphs">1-1-1</text>
</g>
<line x1="792.5" y1="659.5" x2="887.5" y2="659.5" stroke="#fff"/>
<line x1="792.5" y1="667.5" x2="887.5" y2="667.5" stroke="#fff"/>
<line x1="792.5" y1="675.5" x2="887.5" y2="675.5" stroke="#fff"/>
<line x1="792.5" y1="684.5" x2="887.5" y2="684.5" stroke="#fff"/>
<line x1="792.5" y1="692.5" x2="887.5" y2="692.5" stroke="#fff"/>
<line x1="792.5" y1="700.5" x2="887.5" y2="700.5" stroke="#fff"/>
<line x1="792.5" y1="709.5" x2="887.5" y2="709.5" stroke="#fff"/>
<line x1="792.5" y1="650.5" x2="792.5" y2="717.5" stroke="#fff"/>
<line x1="805.5" y1="650.5" x2="805.5" y2="684.5" stroke="#fff"/>
<line x1="815.5" y1="650.5" x2="815.5" y2="684.5" stroke="#fff"/>
<line x1="835.5" y1="650.5" x2="835.5" y2="684.5" stroke="#fff"/>
<line x1="806.5" y1="684.5" x2="806.5" y2="717.5" stroke="#fff"/>
<line x1="820.5" y1="684.5" x2="820.5" y2="717.5" stroke="#fff"/>
<line x1="839.5" y1="684.5" x2="839.5" y2="717.5" stroke="#fff"/>
<line x1="854.5" y1="650.5" x2="854.5" y2="717.5" stroke="#fff"/>
<line x1="868.5" y1="650.5" x2="868.5" y2="717.5" stroke="#fff"/>
<line x1="887.5" y1="650.5" x2="887.5" y2="717.5" stroke="#fff"/>
<line x1="947.5" y1="650.5" x2="947.5" y2="717.5" stroke="#fff"/>
<line x1="887.5" y1="685.5" x2="947.5" y2="685.5" stroke="#fff"/>
<line x1="887.5" y1="696.5" x2="1007.5" y2="696.5" stroke="#fff"/>
<line x1="887.5" y1="706.5" x2="947.5" y2="706.5" stroke="#fff"/>
<line x1="918.5" y1="685.5" x2="918.5" y2="706.5" stroke="#fff"/>
<line x1="933.5" y1="685.5" x2="933.5" y2="706.5" stroke="#fff"/>
<line x1="895.5" y1="696.5" x2="895.5" y2="706.5" stroke="#fff"/>
<line x1="904.5" y1="696.5" x2="904.5" y2="706.5" stroke="#fff"/>
<line x1="910.5" y1="696.5" x2="910.5" y2="706.5" stroke="#fff"/>
<line x1="947.5" y1="672.5" x2="1007.5" y2="672.5" stroke="#fff"/>
<g font-family='"Liberation Sans","Noto Sans CJK SC",sans-serif' fill="#ff0" font-weight="bold" stroke="#ff0" stroke-width="0.45">
<text x="592" y="593" font-size="6.2" textLength="18" lengthAdjust="spacingAndGlyphs">技术要求</text>
<text x="563" y="603" font-size="4.6" textLength="40.5" lengthAdjust="spacingAndGlyphs">1.装配前所有零件应清洗干净。</text>
<text x="563" y="612" font-size="4.6" textLength="97.5" lengthAdjust="spacingAndGlyphs">2.齿轮啮合侧隙及接触斑点应符合要求，轴承间隙调整至0.05~0.1。</text>
<text x="563" y="620" font-size="4.6" textLength="108.5" lengthAdjust="spacingAndGlyphs">3.减速箱内注入工业齿轮油至规定高度，各密封处不得有渗漏现象。</text>
<text x="563" y="629" font-size="4.6" textLength="63.5" lengthAdjust="spacingAndGlyphs">4.装配后试运转2小时，应无异常噪声。</text>
<text x="563" y="637" font-size="4.6" textLength="157.5" lengthAdjust="spacingAndGlyphs">5.导轨、滑动面应涂润滑脂，升降机构运动灵活无卡滞，液压系统压力正常，各紧固件不得松动，油漆表面平整光洁。</text>
</g>
</svg>
<div id="sb"><div class="tab"></div><span class="lbl">局2</span></div>
</body>
</html>
